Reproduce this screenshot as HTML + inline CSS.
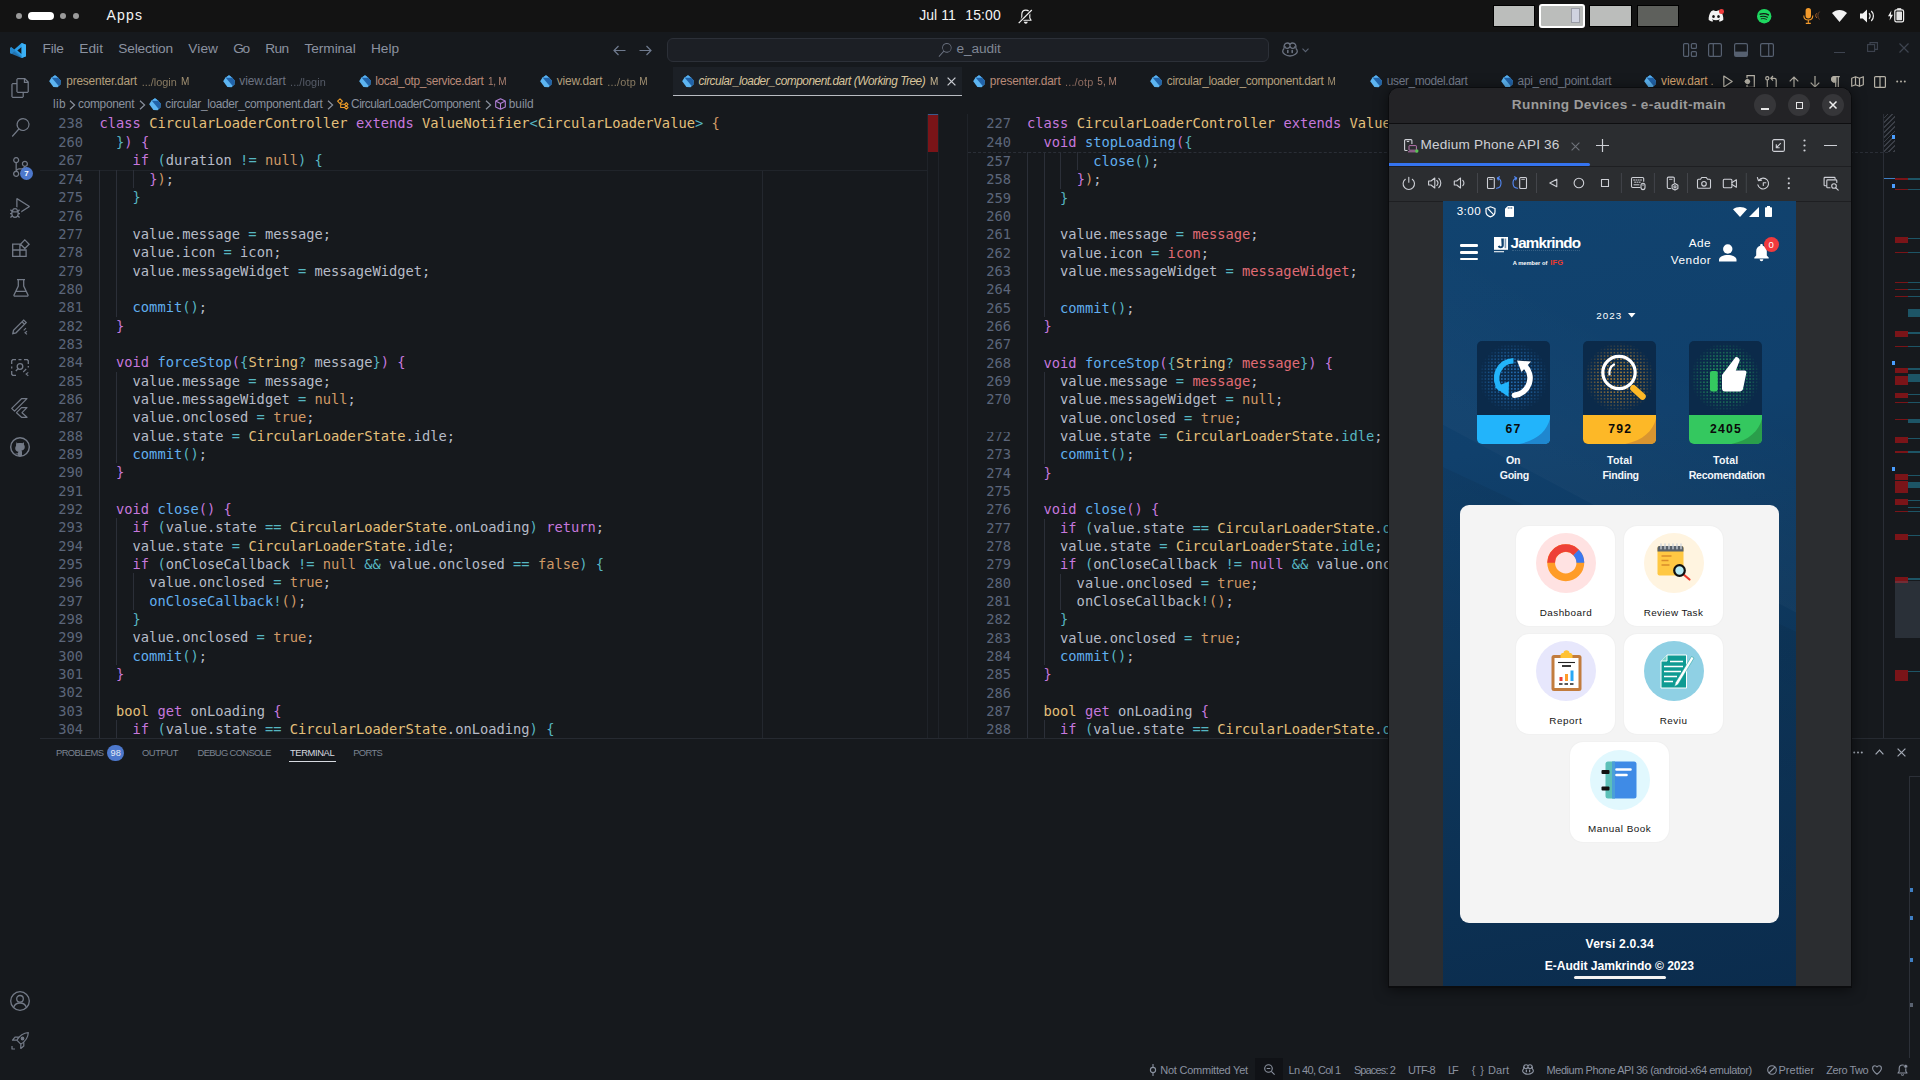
<!DOCTYPE html>
<html lang="en"><head><meta charset="utf-8"><title>e_audit - Visual Studio Code</title>
<style>
*{box-sizing:border-box;margin:0;padding:0}
html,body{width:1920px;height:1080px;overflow:hidden;background:#16191d}
body{position:relative;font-family:"Liberation Sans","DejaVu Sans",sans-serif;color:#abb2bf;font-size:13px}
.abs{position:absolute}
svg{display:block;overflow:visible}
/* gnome */
#gnome{position:absolute;left:0;top:0;width:1920px;height:32px;background:#131313;color:#f2f2f2}
#gnome .t{position:absolute;top:0;height:32px;line-height:31px;font-size:14.6px;white-space:nowrap;color:#f4f4f4}
.ws{position:absolute;top:5px;height:22px;background:#bbbdbb;border:1px solid #000}
/* vscode */
#title{position:absolute;left:0;top:32px;width:1920px;height:35px;background:#16191d}
#title .m{position:absolute;top:0;height:35px;line-height:34px;font-size:13.6px;color:#8b92a0;white-space:nowrap}
#search{position:absolute;left:667px;top:38px;width:602px;height:24px;border-radius:6px;background:#1c1f25;border:1px solid #2c3038}
#act{position:absolute;left:0;top:67px;width:40px;height:991px;background:#16191d}
#act svg{position:absolute;left:8px}
.tab{position:absolute;top:67px;height:29px;line-height:28px;font-size:12.3px;white-space:nowrap}
.tab .d{font-size:11.3px;opacity:.75;margin-left:6px}
.tab .s{font-size:10px;margin-left:5px}
.mod{color:#b9a27a}.gry{color:#6d7483}.err{color:#c4846c}
.dart{position:absolute;width:13px;height:13px}
#crumbs{position:absolute;left:40px;top:96px;height:18px;line-height:17px;font-size:12.1px;color:#8a919e;white-space:nowrap}
.code{position:absolute;top:114px;font-family:"DejaVu Sans Mono","Liberation Mono",monospace;font-size:13.74px;color:#b6bcc8}
.code .ln{height:18.333px;line-height:18.333px;position:absolute;left:0;width:100%}
.code .no{position:absolute;left:0;top:0;text-align:right;color:#5c667a}
.code .cd{position:absolute;top:0;white-space:pre}
.code.left{left:40px;width:887px}.code.left .no{width:43px}.code.left .cd{left:59.5px}
.code.right{left:967px;width:430px;overflow:hidden;height:624px}.code.right .no{width:44px}.code.right .cd{left:60px}
.k{color:#c678dd}.c{color:#e5c07b}.f{color:#61afef}.o{color:#56b6c2}.n{color:#d19a66}.v{color:#e06c75}
.b1{color:#d19a66}.b2{color:#c678dd}.b3{color:#56b6c2}
.guide{position:absolute;width:1px;background:#2b2f38}
#panel{position:absolute;left:40px;top:738px;width:1880px;height:320px;border-top:1px solid #262a31}
.pt{position:absolute;top:6px;height:18px;line-height:18px;font-size:9.4px;color:#7c8492;white-space:nowrap;letter-spacing:.05px}
#status{position:absolute;left:0;top:1058px;width:1920px;height:22px;background:#16191d}
#status .s{position:absolute;top:0;height:22px;line-height:22px;font-size:10.4px;color:#8b92a0;white-space:nowrap}
/* emulator */
#emu{position:absolute;left:1388px;top:88px;width:464px;height:900px;background:#2b2d30;border-radius:10px 10px 0 0;border:1px solid #0c0c0d;overflow:hidden}
.ft{position:absolute;white-space:pre}
</style></head><body>
<div id="gnome">
 <div class="abs" style="left:16px;top:13px;width:6px;height:6px;border-radius:3px;background:#9a9a9a"></div>
 <div class="abs" style="left:28px;top:12px;width:26px;height:8px;border-radius:4px;background:#fff"></div>
 <div class="abs" style="left:60px;top:13px;width:6px;height:6px;border-radius:3px;background:#9a9a9a"></div>
 <div class="abs" style="left:73px;top:13px;width:6px;height:6px;border-radius:3px;background:#9a9a9a"></div>
 <div class="ws" style="left:1493px;width:42px"></div>
 <div class="ws" style="left:1539px;width:46px;top:4px;height:24px;border:2px solid #fff;border-radius:3px"><div class="abs" style="left:30px;top:2px;width:9px;height:15px;background:#d0d3e0;border:1px solid #9a9ca6"></div></div>
 <div class="ws" style="left:1589px;width:43px"></div>
 <div class="ws" style="left:1637px;width:42px;background:#5e605c"></div>

 <!-- bell slash -->
 <svg class="abs" style="left:1017px;top:8px" width="17" height="17" viewBox="1017 8 17 17" fill="none" stroke="#f2f2f2" stroke-width="1.100" stroke-linejoin="round"><path d="M1020.500 20.300h10.600l-1.300-2.300v-3.400c0-2.700-1.700-4.500-4-4.500s-4 1.800-4 4.500v3.400z"/><path d="M1023.800 21.800c.3 1.300 1 1.900 2 1.900s1.700-.6 2-1.900z" fill="#f2f2f2" stroke="none"/><path d="M1018.700 23.100 1031.800 10" stroke="#131313" stroke-width="3"/><path d="M1018.700 23.100 1031.800 10" stroke-width="1.200"/></svg>
 <!-- discord -->
 <svg class="abs" style="left:1708px;top:10px" width="16" height="12" viewBox="0 0 16 12"><path d="M3.200 1.200C4.300.6 5.300.3 6.200.2l.4.800c.9-.1 1.900-.1 2.800 0l.4-.8c.9.100 1.900.4 3 1C14.700 3.900 15.600 7 15.300 10c-1.200.9-2.400 1.500-3.700 1.800l-.8-1.300c.5-.2.900-.4 1.300-.7l-.3-.3c-2.400 1.100-5.200 1.100-7.600 0l-.3.300c.4.300.8.500 1.300.7l-.8 1.300C3.100 11.500 1.900 10.900.7 10 .4 7 1.300 3.900 3.200 1.200z" fill="#f2f2f2"/><ellipse cx="5.500" cy="6.600" rx="1.300" ry="1.500" fill="#131313"/><ellipse cx="10.500" cy="6.600" rx="1.300" ry="1.500" fill="#131313"/></svg>
 <div class="abs" style="left:1719px;top:9.200px;width:4.600px;height:4.600px;border-radius:2.300px;background:#ed3b3b"></div>
 <!-- spotify -->
 <svg class="abs" style="left:1756.800px;top:8.500px" width="14.400" height="14.400" viewBox="0 0 14.400 14.400"><circle cx="7.200" cy="7.200" r="7.200" fill="#1ed760"/><g fill="none" stroke="#131313" stroke-linecap="round"><path d="M3.200 5.200c2.800-.9 5.800-.6 8.200.7" stroke-width="1.400"/><path d="M3.700 7.600c2.300-.7 4.700-.4 6.700.7" stroke-width="1.100"/><path d="M4.200 9.800c1.800-.5 3.600-.3 5.200.6" stroke-width=".9"/></g></svg>
 <!-- mic -->
 <svg class="abs" style="left:1802px;top:7px" width="20" height="18" viewBox="1802 7 20 18" fill="none"><rect x="1805.600" y="8" width="5.400" height="10.400" rx="2.700" fill="#f39a2b"/><path d="M1803.800 15.500c0 2.700 1.900 4.500 4.500 4.500s4.500-1.800 4.500-4.500M1808.300 20v3.200M1805.800 23.400h5" stroke="#f39a2b" stroke-width="1.100"/><path d="M1816.800 13.300a3 3 0 0 0 0 4.600" stroke="#b8692a" stroke-width="1"/><path d="M1819.600 11.600a5.500 5.500 0 0 0 0 8" stroke="#6e4326" stroke-width="1"/></svg>
 <!-- wifi -->
 <svg class="abs" style="left:1832.300px;top:10px" width="15" height="12" viewBox="0 0 15 12"><path d="M7.500 12 0 3C2.200 1 4.700 0 7.500 0s5.300 1 7.500 3z" fill="#f2f2f2"/></svg>
 <!-- volume -->
 <svg class="abs" style="left:1860.400px;top:9px" width="15" height="14" viewBox="0 0 15 14" fill="none"><path d="M0 4.500h2.800L7 .5v13L2.800 9.500H0z" fill="#f2f2f2"/><path d="M9 4.300a3.800 3.800 0 0 1 0 5.400" stroke="#f2f2f2" stroke-width="1.200"/><path d="M11.300 2a7 7 0 0 1 0 10" stroke="#f2f2f2" stroke-width="1.200"/></svg>
 <!-- battery -->
 <svg class="abs" style="left:1888px;top:8px" width="16.500" height="14.500" viewBox="0 0 16.500 14.500" fill="none"><path d="M3.400 2.500 0 8.300h2.200L1.600 12.500 5 6.700H2.800z" fill="#f2f2f2"/><rect x="6.800" y="1.800" width="8.800" height="12" rx="1.600" stroke="#f2f2f2" stroke-width="1.200"/><rect x="9.200" y=".2" width="4" height="1.600" fill="#f2f2f2"/><rect x="8.400" y="3.400" width="5.600" height="8.800" rx=".6" fill="#e4e4e4"/></svg>
</div>
<div id="title">
 <!-- vscode logo -->
 <svg class="abs" style="left:10px;top:10.500px" width="16" height="15" viewBox="0 0 16 15"><path d="M11.600 0 16 1.800v11.400L11.600 15 4.300 8.600 1.400 10.800 0 10.100V4.900l1.400-.7 2.900 2.200zM11.600 4.100 7.300 7.500l4.300 3.400z" fill="#2b9fe9"/><path d="M11.600 0 16 1.800v11.400L11.600 15z" fill="#3bb0f5"/><path d="M0 4.900l1.400-.7L11.600 13v2L1.400 10.800 0 10.100z" fill="#2582c8" opacity=".85"/></svg>
 <!-- nav arrows -->
 <svg class="abs" style="left:613px;top:13px" width="13" height="11" viewBox="0 0 13 11" fill="none" stroke="#6f7a8e" stroke-width="1.200"><path d="M12.500 5.500H1M5.500 1 1 5.500 5.500 10"/></svg>
 <svg class="abs" style="left:639px;top:13px" width="13" height="11" viewBox="0 0 13 11" fill="none" stroke="#6f7a8e" stroke-width="1.200"><path d="M.5 5.500H12M7.500 1 12 5.500 7.500 10"/></svg>
 <!-- copilot -->
 <svg class="abs" style="left:1281.500px;top:10px" width="16" height="15" viewBox="0 0 16 15" fill="none" stroke="#6b7280" stroke-width="1.300"><path d="M2.200 6.500C1.500 3 3 1 5.500 1 7.300 1 8 2.200 8 3.500 8 2.200 8.700 1 10.500 1c2.500 0 4 2 3.300 5.500"/><path d="M2.200 6.500C1 7.300.7 8 .7 9.500c0 1.500 2.800 4.500 7.300 4.500s7.300-3 7.300-4.500c0-1.500-.3-2.200-1.500-3"/><path d="M5.800 8.500v2M10.200 8.500v2" stroke-width="1.600" stroke-linecap="round"/><path d="M8 3.500c0 1.800-1 2.800-2.800 2.800S2.800 5.500 3 3.800M8 3.500c0 1.800 1 2.800 2.800 2.800s2.400-.8 2.200-2.500"/></svg>
 <svg class="abs" style="left:1301.500px;top:16px" width="7" height="5" viewBox="0 0 7 5" fill="none" stroke="#5b6373" stroke-width="1.100"><path d="M.5.700 3.500 3.700 6.500.7"/></svg>
 <!-- layout icons -->
 <svg class="abs" style="left:1682.500px;top:10.500px" width="14" height="14" viewBox="0 0 14 14" fill="none" stroke="#566070" stroke-width="1.200"><rect x=".6" y=".6" width="5" height="12.800" rx="1"/><rect x="8.400" y=".6" width="5" height="4.800" rx="1"/><rect x="8.400" y="8.600" width="5" height="4.800" rx="1"/></svg>
 <svg class="abs" style="left:1708px;top:10.500px" width="14" height="14" viewBox="0 0 14 14" fill="none" stroke="#566070" stroke-width="1.200"><rect x=".6" y=".6" width="12.800" height="12.800" rx="1.500"/><path d="M5.300.6v12.800"/></svg>
 <svg class="abs" style="left:1734px;top:10.500px" width="14" height="14" viewBox="0 0 14 14" fill="none" stroke="#566070" stroke-width="1.200"><rect x=".6" y=".6" width="12.800" height="12.800" rx="1.500"/><rect x="1" y="8.600" width="12" height="4.600" fill="#566070" stroke="none"/></svg>
 <svg class="abs" style="left:1760px;top:10.500px" width="14" height="14" viewBox="0 0 14 14" fill="none" stroke="#566070" stroke-width="1.200"><rect x=".6" y=".6" width="12.800" height="12.800" rx="1.500"/><path d="M8.700.6v12.800"/></svg>
 <!-- window controls -->
 <div class="abs" style="left:1834px;top:20px;width:11px;height:1px;background:#3e4450"></div>
 <svg class="abs" style="left:1867px;top:10px" width="11" height="10" viewBox="0 0 11 10" fill="none" stroke="#3e4450" stroke-width="1.100"><rect x=".6" y="2.600" width="7" height="6.800"/><path d="M3 2.600V.6h7.400v6.800H7.800"/></svg>
 <svg class="abs" style="left:1898.500px;top:10.500px" width="10" height="10" viewBox="0 0 10 10" fill="none" stroke="#3e4450" stroke-width="1.200"><path d="M.5.500 9.500 9.500M9.500.5.5 9.500"/></svg>
</div>
<div id="search"></div>
<svg class="abs" style="left:938px;top:43px" width="14" height="14" viewBox="0 0 24 24" fill="#6b7280"><path d="M15.250 0a8.250 8.250 0 0 0-6.180 13.720L1 22.880l1.120 1.120 8.050-9.120A8.251 8.251 0 1 0 15.250.010V0zm0 15a6.750 6.750 0 1 1 0-13.500 6.750 6.750 0 0 1 0 13.500z"/></svg>
<div id="act">
<!-- files -->
<svg class="abs" style="left:10.5px;top:10.5px" width="19" height="20" viewBox="0 0 22 24" fill="#737a87"><path d="M17.5 0h-9L7 1.5V6H2.5L1 7.5v15.07L2.5 24h12.07L16 22.57V18h4.7l1.3-1.43V4.5L17.5 0zm0 2.12l2.38 2.38H17.5V2.12zm-3 20.38h-12v-15H7v9.07L8.500 18h6v4.5zm6-6h-12v-15H16V6h4.500v10.500z" transform="translate(-1 0)"/></svg>
<!-- search -->
<svg class="abs" style="left:11px;top:51px" width="19" height="19" viewBox="0 0 24 24" fill="#737a87"><path d="M15.250 0a8.250 8.250 0 0 0-6.180 13.720L1 22.880l1.120 1.120 8.050-9.120A8.251 8.251 0 1 0 15.250.010V0zm0 15a6.750 6.750 0 1 1 0-13.500 6.750 6.750 0 0 1 0 13.500z"/></svg>
<!-- scm -->
<svg class="abs" style="left:12px;top:90px" width="17" height="20" viewBox="2.500 0 19 24" fill="#737a87"><path d="M21.007 8.222A3.738 3.738 0 0 0 15.045 5.200a3.737 3.737 0 0 0 1.156 6.583 2.988 2.988 0 0 1-2.668 1.670h-2.990a4.456 4.456 0 0 0-2.989 1.165V7.400a3.737 3.737 0 1 0-1.494 0v9.117a3.776 3.776 0 1 0 1.816.099 2.990 2.990 0 0 1 2.668-1.667h2.990a4.484 4.484 0 0 0 4.223-3.039 3.736 3.736 0 0 0 3.250-3.687zM4.565 3.738a2.242 2.242 0 1 1 4.484 0 2.242 2.242 0 0 1-4.484 0zm4.484 16.441a2.242 2.242 0 1 1-4.484 0 2.242 2.242 0 0 1 4.484 0zm8.221-9.715a2.242 2.242 0 1 1 0-4.485 2.242 2.242 0 0 1 0 4.485z"/></svg>
<div class="abs" style="left:20px;top:100px;width:13px;height:13px;border-radius:7px;background:#4d78cc;color:#fff;font-size:8px;font-weight:bold;line-height:13px;text-align:center">7</div>
<!-- debug -->
<svg class="abs" style="left:10px;top:130.500px" width="20" height="20" viewBox="0 0 24 24" fill="#737a87"><path d="M10.940 13.500l-1.320 1.320a3.730 3.730 0 0 0-7.240 0L1.060 13.500 0 14.560l1.720 1.720-.22.22V18H0v1.500h1.500v.080c.077.489.214.966.410 1.420L0 22.940 1.060 24l1.650-1.650A4.308 4.308 0 0 0 6 24a4.310 4.310 0 0 0 3.290-1.650L10.940 24 12 22.940 10.090 21c.198-.464.336-.951.410-1.450v-.1H12V18h-1.500v-1.500l-.22-.22L12 14.560l-1.060-1.060zM6 13.500a2.250 2.250 0 0 1 2.250 2.250h-4.500A2.250 2.250 0 0 1 6 13.500zm3 6a3.330 3.330 0 0 1-3 3 3.330 3.330 0 0 1-3-3v-2.250h6v2.250zm14.760-9.900v1.260L13.500 17.370V15.600l8.500-5.370L9 2v9.460a5.070 5.070 0 0 0-1.500-.72V.630L8.640 0l15.120 9.600z"/></svg>
<!-- extensions -->
<svg class="abs" style="left:12px;top:172px" width="18" height="18" viewBox="0 0 18 18" fill="none" stroke="#737a87" stroke-width="1.300"><path d="M0.700 5.200h7.200v12.100h-7.200zM0.700 11h13.400v6.300h-13.400M14.100 11v6.300M12.800 0.900l4.300 4.300-4.300 4.300-4.300-4.300z"/></svg>
<!-- beaker -->
<svg class="abs" style="left:12.500px;top:211.500px" width="16" height="18" viewBox="0 0 16 18" fill="none" stroke="#737a87" stroke-width="1.300"><path d="M4 0.700h8M5.300 0.700v6.300L0.900 16.200l0.500 1h13.200l0.500-1L10.700 7V0.700M2.600 12.400h10.800"/></svg>
<!-- pencil sparkle -->
<svg class="abs" style="left:12px;top:252px" width="16" height="16" viewBox="0 0 16 16" fill="none" stroke="#737a87" stroke-width="1.300"><path d="M0.800 14.600l0.700-3.300L11.700 1.100l2.500 2.500L4 13.800zM10 2.800l2.500 2.500"/><path d="M11.700 11.400l2.300-2.300M15 12.200l-2 1.600 2 1.600" stroke-width="1.100"/></svg>
<!-- scan -->
<svg class="abs" style="left:11px;top:292px" width="18" height="18" viewBox="0 0 18 18" fill="none" stroke="#737a87" stroke-width="1.300"><path d="M0.700 5V1.700l1-1H5M13 0.700h3.300l1 1V5M0.700 12v3.300l1 1H5M0.700 7.500v2M7.500 0.700h3M17.300 7v1.500"/><circle cx="9" cy="7.500" r="2.800"/><path d="M7 9.700l-2.200 2.300"/><path d="M12.200 13l3-3M17.300 13.400l-2.200 1.700 2.200 1.700" stroke-width="1.100"/></svg>
<!-- flutter -->
<svg class="abs" style="left:11px;top:330.500px" width="17" height="20" viewBox="0 0 17 20" fill="none" stroke="#737a87" stroke-width="1.200" stroke-linejoin="round"><path d="M10.500 0.700h5.500L3.500 13.200 0.700 10.400zM10.500 9.700h5.500L11 14.700l5 4.600h-5.500L5.500 14.700z"/></svg>
<!-- github -->
<svg class="abs" style="left:10px;top:370px" width="20" height="20" viewBox="0 0 20 20"><circle cx="10" cy="10" r="9.300" fill="none" stroke="#737a87" stroke-width="1.400"/><path d="M6.300 5.200l1.300 1c1.500-.4 3.300-.4 4.800 0l1.300-1c.4.900.4 1.700.2 2.300.6.700.9 1.500.9 2.500 0 2.400-1.500 3.300-3.300 3.600.4.400.5.900.5 1.600v3.800h-4v-1.500c-1.800.3-2.400-.6-2.900-1.500 1 .6 1.900.9 2.900 0 0-.5.200-.9.500-1.200C6.700 14.500 5.200 13.600 5.200 11.200c0-1 .3-1.800.9-2.500-.2-.6-.2-1.400.2-2.300z" fill="#737a87"/></svg>
<!-- account -->
<svg class="abs" style="left:10px;top:924px" width="20" height="20" viewBox="0 0 20 20" fill="none" stroke="#737a87" stroke-width="1.300"><circle cx="10" cy="10" r="9.300"/><circle cx="10" cy="7.800" r="3.300"/><path d="M3.600 16.600c1-3.300 3.400-4.600 6.400-4.600s5.400 1.300 6.400 4.600"/></svg>
<!-- rocket -->
<svg class="abs" style="left:10.500px;top:965px" width="18" height="18" viewBox="0 0 18 18" fill="none" stroke="#737a87" stroke-width="1.200" stroke-linejoin="round"><path d="M17.300 0.700c-5 .3-8.500 2.600-11.500 7.500l4 4c4.900-3 7.200-6.500 7.500-11.500zM5.800 8.200H1.500l2.500-3h3.600M9.800 12.200v4.300l3-2.500v-3.600M1 14v3h3"/><circle cx="11.500" cy="6.500" r="1.300" fill="#737a87"/></svg>
</div>

<!-- tabs -->
<div class="abs" style="left:673px;top:67px;width:289px;height:29px;background:#1c2026;border-bottom:1.500px solid #b9bcc2"></div>
<svg class="abs" style="left:48.60px;top:75.40px" width="12" height="12.5" viewBox="0 0 12 12.500"><path d="M6 .2 9 2.500 11.700 5.600 11.400 9.400 8.600 12.200 4.400 11.900 .2 6.200 2.500 2.500z" fill="#5db5f2"/><path d="M2.600 2.500 8.900 2.600 11.700 5.600 11.400 9.400 9.700 11.100z" fill="#2163a9"/><path d="M3.400 2.500 6 .2 8.900 2.600z" fill="#55b2f6"/></svg><svg class="abs" style="left:223.00px;top:75.40px" width="12" height="12.5" viewBox="0 0 12 12.500"><path d="M6 .2 9 2.500 11.700 5.600 11.400 9.400 8.600 12.200 4.400 11.900 .2 6.200 2.500 2.500z" fill="#5db5f2"/><path d="M2.600 2.500 8.900 2.600 11.700 5.600 11.400 9.400 9.700 11.100z" fill="#2163a9"/><path d="M3.400 2.500 6 .2 8.900 2.600z" fill="#55b2f6"/></svg><svg class="abs" style="left:359.30px;top:75.40px" width="12" height="12.5" viewBox="0 0 12 12.500"><path d="M6 .2 9 2.500 11.700 5.600 11.400 9.400 8.600 12.200 4.400 11.900 .2 6.200 2.500 2.500z" fill="#5db5f2"/><path d="M2.600 2.500 8.900 2.600 11.700 5.600 11.400 9.400 9.700 11.100z" fill="#2163a9"/><path d="M3.400 2.500 6 .2 8.900 2.600z" fill="#55b2f6"/></svg><svg class="abs" style="left:540.00px;top:75.40px" width="12" height="12.5" viewBox="0 0 12 12.500"><path d="M6 .2 9 2.500 11.700 5.600 11.400 9.400 8.600 12.200 4.400 11.900 .2 6.200 2.500 2.500z" fill="#5db5f2"/><path d="M2.600 2.500 8.900 2.600 11.700 5.600 11.400 9.400 9.700 11.100z" fill="#2163a9"/><path d="M3.400 2.500 6 .2 8.900 2.600z" fill="#55b2f6"/></svg><svg class="abs" style="left:682.00px;top:75.40px" width="12" height="12.5" viewBox="0 0 12 12.500"><path d="M6 .2 9 2.500 11.700 5.600 11.400 9.400 8.600 12.200 4.400 11.900 .2 6.200 2.500 2.500z" fill="#5db5f2"/><path d="M2.600 2.500 8.900 2.600 11.700 5.600 11.400 9.400 9.700 11.100z" fill="#2163a9"/><path d="M3.400 2.500 6 .2 8.900 2.600z" fill="#55b2f6"/></svg><svg class="abs" style="left:973.00px;top:75.40px" width="12" height="12.5" viewBox="0 0 12 12.500"><path d="M6 .2 9 2.500 11.700 5.600 11.400 9.400 8.600 12.200 4.400 11.900 .2 6.200 2.500 2.500z" fill="#5db5f2"/><path d="M2.600 2.500 8.900 2.600 11.700 5.600 11.400 9.400 9.700 11.100z" fill="#2163a9"/><path d="M3.400 2.500 6 .2 8.900 2.600z" fill="#55b2f6"/></svg><svg class="abs" style="left:1150.00px;top:75.40px" width="12" height="12.5" viewBox="0 0 12 12.500"><path d="M6 .2 9 2.500 11.700 5.600 11.400 9.400 8.600 12.200 4.400 11.900 .2 6.200 2.500 2.500z" fill="#5db5f2"/><path d="M2.600 2.500 8.900 2.600 11.700 5.600 11.400 9.400 9.700 11.100z" fill="#2163a9"/><path d="M3.400 2.500 6 .2 8.900 2.600z" fill="#55b2f6"/></svg><svg class="abs" style="left:1370.00px;top:75.40px" width="12" height="12.5" viewBox="0 0 12 12.500"><path d="M6 .2 9 2.500 11.700 5.600 11.400 9.400 8.600 12.200 4.400 11.900 .2 6.200 2.500 2.500z" fill="#5db5f2"/><path d="M2.600 2.500 8.900 2.600 11.700 5.600 11.400 9.400 9.700 11.100z" fill="#2163a9"/><path d="M3.400 2.500 6 .2 8.900 2.600z" fill="#55b2f6"/></svg><svg class="abs" style="left:1501.00px;top:75.40px" width="12" height="12.5" viewBox="0 0 12 12.500"><path d="M6 .2 9 2.500 11.700 5.600 11.400 9.400 8.600 12.200 4.400 11.900 .2 6.200 2.500 2.500z" fill="#5db5f2"/><path d="M2.600 2.500 8.900 2.600 11.700 5.600 11.400 9.400 9.700 11.100z" fill="#2163a9"/><path d="M3.400 2.500 6 .2 8.900 2.600z" fill="#55b2f6"/></svg><svg class="abs" style="left:1643.70px;top:75.40px" width="12" height="12.5" viewBox="0 0 12 12.500"><path d="M6 .2 9 2.500 11.700 5.600 11.400 9.400 8.600 12.200 4.400 11.900 .2 6.200 2.500 2.500z" fill="#5db5f2"/><path d="M2.600 2.500 8.900 2.600 11.700 5.600 11.400 9.400 9.700 11.100z" fill="#2163a9"/><path d="M3.400 2.500 6 .2 8.900 2.600z" fill="#55b2f6"/></svg>
<svg class="abs" style="left:946.500px;top:77px" width="9" height="9" viewBox="0 0 9 9" fill="none" stroke="#c9ccd2" stroke-width="1.300"><path d="M.6.600 8.400 8.400M8.400.6.600 8.400"/></svg>
<!-- editor actions -->
<svg class="abs" style="left:1722.500px;top:75px" width="10" height="13" viewBox="0 0 10 13" fill="none" stroke="#b5b1a6" stroke-width="1.200" stroke-linejoin="round"><path d="M.8 1 9.200 6.500.8 12z"/></svg>
<svg class="abs" style="left:1743.500px;top:75px" width="11" height="13" viewBox="0 0 11 13" fill="none" stroke="#b5b1a6" stroke-width="1.200"><path d="M3 3V.7h7.300v11.600H3V10"/><circle cx="3.400" cy="6.500" r="2" fill="#b5b1a6"/><path d="M.6 6.500h5.600M3.400 3.700v5.600" stroke-width="1"/></svg>
<svg class="abs" style="left:1765px;top:75px" width="13" height="13" viewBox="0 0 13 13" fill="none" stroke="#b5b1a6" stroke-width="1.200"><circle cx="2.300" cy="3.300" r="1.600"/><path d="M2.300 5v7.500"/><path d="M6 3.300h3.500c1.200 0 1.700.7 1.700 1.700v7.500M8 1 5.800 3.300 8 5.600"/></svg>
<svg class="abs" style="left:1788.500px;top:75.500px" width="10" height="12" viewBox="0 0 10 12" fill="none" stroke="#b5b1a6" stroke-width="1.200"><path d="M5 12V1M.7 5.300 5 1l4.300 4.300"/></svg>
<svg class="abs" style="left:1809.700px;top:75.500px" width="10" height="12" viewBox="0 0 10 12" fill="none" stroke="#b5b1a6" stroke-width="1.200"><path d="M5 0v11M.7 6.700 5 11l4.300-4.300"/></svg>
<svg class="abs" style="left:1831px;top:75.500px" width="9" height="12" viewBox="0 0 9 12" fill="none" stroke="#b5b1a6" stroke-width="1.200"><path d="M8.800.6H3.700C1.800.6.700 1.800.7 3.300S1.800 6 3.700 6h1V.6M4.700.6V12M7.300.6V12" /><path d="M.7 3.300C.7 1.800 1.800.6 3.700.6h1V6h-1C1.800 6 .7 4.800.7 3.300z" fill="#b5b1a6"/></svg>
<svg class="abs" style="left:1851px;top:76px" width="13" height="11" viewBox="0 0 13 11" fill="none" stroke="#b5b1a6" stroke-width="1.200" stroke-linejoin="round"><path d="M.7 2.200 4.500.7l4 1.500L12.300.7v8.100L8.500 10.300l-4-1.500L.7 10.300zM4.500.7v8.100M8.500 2.200v8.100"/></svg>
<svg class="abs" style="left:1874px;top:75.500px" width="12" height="12" viewBox="0 0 12 12" fill="none" stroke="#b5b1a6" stroke-width="1.200"><rect x=".6" y=".6" width="10.800" height="10.800" rx="1"/><path d="M6 .6v10.800"/></svg>
<svg class="abs" style="left:1896px;top:80px" width="10" height="3" viewBox="0 0 10 3" fill="#b5b1a6"><circle cx="1.200" cy="1.500" r="1"/><circle cx="5" cy="1.500" r="1"/><circle cx="8.800" cy="1.500" r="1"/></svg>
<!-- breadcrumb icons -->
<svg class="abs" style="left:149.00px;top:98.00px" width="12" height="12.5" viewBox="0 0 12 12.500"><path d="M6 .2 9 2.500 11.700 5.600 11.400 9.400 8.600 12.200 4.400 11.900 .2 6.200 2.500 2.500z" fill="#5db5f2"/><path d="M2.600 2.500 8.900 2.600 11.700 5.600 11.400 9.400 9.700 11.100z" fill="#2163a9"/><path d="M3.400 2.500 6 .2 8.900 2.600z" fill="#55b2f6"/></svg><svg class="abs" style="left:69.00px;top:99.50px" width="7" height="10" viewBox="0 0 7 10" fill="none" stroke="#8a919e" stroke-width="1.200"><path d="M1 .8 5.600 5 1 9.200"/></svg><svg class="abs" style="left:138.50px;top:99.50px" width="7" height="10" viewBox="0 0 7 10" fill="none" stroke="#8a919e" stroke-width="1.200"><path d="M1 .8 5.600 5 1 9.200"/></svg><svg class="abs" style="left:326.50px;top:99.50px" width="7" height="10" viewBox="0 0 7 10" fill="none" stroke="#8a919e" stroke-width="1.200"><path d="M1 .8 5.600 5 1 9.200"/></svg><svg class="abs" style="left:484.50px;top:99.50px" width="7" height="10" viewBox="0 0 7 10" fill="none" stroke="#8a919e" stroke-width="1.200"><path d="M1 .8 5.600 5 1 9.200"/></svg>
<svg class="abs" style="left:337px;top:98px" width="12" height="12" viewBox="0 0 12 12" fill="none" stroke="#ee9d28" stroke-width="1.100" stroke-linejoin="round"><path d="M3 .8 5.400 3.200 3 5.600.6 3.200zM3.700 4.800v4.700h3.600M3.700 6.300h3.600M9.300 4.600l1.700 1.700-1.700 1.700-1.700-1.700zM9.300 7.800l1.700 1.700-1.700 1.700-1.700-1.700z"/></svg>
<svg class="abs" style="left:494.500px;top:98px" width="11" height="12" viewBox="0 0 11 12" fill="none" stroke="#b180d7" stroke-width="1.100" stroke-linejoin="round"><path d="M5.500.7 10.300 3v6L5.500 11.300.7 9V3zM.7 3l4.800 2.400L10.300 3M5.500 5.400v5.900"/></svg>
<!-- left editor decorations -->
<div class="abs" style="left:761.500px;top:170px;width:1px;height:568px;background:#23272e"></div>
<div class="abs" style="left:40px;top:169.500px;width:887px;height:1px;background:#20242a"></div>
<div class="abs" style="left:927px;top:114px;width:11px;height:38px;background:#7a1418;border-top:1px solid #3a5a8c"></div>
<div class="abs" style="left:926.500px;top:114px;width:1px;height:624px;background:#1f2329"></div>
<div class="abs" style="left:938px;top:114px;width:1px;height:624px;background:#1f2329"></div>
<div class="abs" style="left:966.500px;top:114px;width:1px;height:624px;background:#1f2329"></div>
<div class="guide" style="left:99.00px;top:169.85px;height:568.39px"></div><div class="guide" style="left:116.00px;top:169.85px;height:146.68px"></div><div class="guide" style="left:132.50px;top:169.85px;height:18.34px"></div><div class="guide" style="left:116.00px;top:371.53px;height:91.68px"></div><div class="guide" style="left:116.00px;top:518.22px;height:146.69px"></div><div class="guide" style="left:132.50px;top:573.22px;height:36.68px"></div><div class="guide" style="left:116.00px;top:719.90px;height:18.34px"></div><div class="guide" style="left:1027.00px;top:151.85px;height:586.73px"></div><div class="guide" style="left:1043.54px;top:151.85px;height:165.02px"></div><div class="guide" style="left:1060.08px;top:151.85px;height:36.68px"></div><div class="guide" style="left:1076.62px;top:151.85px;height:18.34px"></div><div class="guide" style="left:1043.54px;top:371.87px;height:91.68px"></div><div class="guide" style="left:1043.54px;top:518.55px;height:146.68px"></div><div class="guide" style="left:1060.08px;top:573.56px;height:36.67px"></div><div class="guide" style="left:1043.54px;top:720.24px;height:18.34px"></div><div class="abs" style="left:1883.3px;top:113.5px;width:1.0px;height:625.0px;background:#2a2e36;"></div><div class="abs" style="left:1883.500px;top:113.500px;width:11.500px;height:38.500px;background:repeating-linear-gradient(135deg,#16191d 0,#16191d 2.200px,#3a3e46 2.200px,#3a3e46 3.400px)"></div><div class="abs" style="left:1891.8px;top:135.0px;width:3.4px;height:4.2px;background:#4a9eff;"></div><div class="abs" style="left:1891.8px;top:184.3px;width:3.4px;height:4.2px;background:#4a9eff;"></div><div class="abs" style="left:1891.8px;top:360.5px;width:3.4px;height:4.2px;background:#4a9eff;"></div><div class="abs" style="left:1891.8px;top:467.3px;width:3.4px;height:4.2px;background:#4a9eff;"></div><div class="abs" style="left:1883.5px;top:178.2px;width:11.5px;height:1.0px;background:#3f7fc4;"></div><div class="abs" style="left:1895.0px;top:178.2px;width:13.0px;height:1.7px;background:#7a1418;"></div><div class="abs" style="left:1908.0px;top:178.2px;width:12.0px;height:1.7px;background:#1d5566;"></div><div class="abs" style="left:1895.0px;top:188.5px;width:13.0px;height:1.7px;background:#7a1418;"></div><div class="abs" style="left:1908.0px;top:188.5px;width:12.0px;height:1.7px;background:#1d5566;"></div><div class="abs" style="left:1895.0px;top:251.7px;width:13.0px;height:1.7px;background:#7a1418;"></div><div class="abs" style="left:1908.0px;top:251.7px;width:12.0px;height:1.7px;background:#1d5566;"></div><div class="abs" style="left:1895.0px;top:281.6px;width:13.0px;height:1.7px;background:#7a1418;"></div><div class="abs" style="left:1908.0px;top:281.6px;width:12.0px;height:1.7px;background:#1d5566;"></div><div class="abs" style="left:1895.0px;top:288.5px;width:13.0px;height:1.7px;background:#7a1418;"></div><div class="abs" style="left:1908.0px;top:288.5px;width:12.0px;height:1.7px;background:#1d5566;"></div><div class="abs" style="left:1895.0px;top:295.6px;width:13.0px;height:1.7px;background:#7a1418;"></div><div class="abs" style="left:1908.0px;top:295.6px;width:12.0px;height:1.7px;background:#1d5566;"></div><div class="abs" style="left:1895.0px;top:345.8px;width:13.0px;height:1.7px;background:#7a1418;"></div><div class="abs" style="left:1908.0px;top:345.8px;width:12.0px;height:1.7px;background:#1d5566;"></div><div class="abs" style="left:1895.0px;top:401.8px;width:13.0px;height:1.7px;background:#7a1418;"></div><div class="abs" style="left:1908.0px;top:401.8px;width:12.0px;height:1.7px;background:#1d5566;"></div><div class="abs" style="left:1895.0px;top:418.5px;width:13.0px;height:1.7px;background:#7a1418;"></div><div class="abs" style="left:1908.0px;top:418.5px;width:12.0px;height:1.7px;background:#1d5566;"></div><div class="abs" style="left:1895.0px;top:451.2px;width:13.0px;height:1.7px;background:#7a1418;"></div><div class="abs" style="left:1908.0px;top:451.2px;width:12.0px;height:1.7px;background:#1d5566;"></div><div class="abs" style="left:1895.0px;top:510.6px;width:13.0px;height:1.7px;background:#7a1418;"></div><div class="abs" style="left:1908.0px;top:510.6px;width:12.0px;height:1.7px;background:#1d5566;"></div><div class="abs" style="left:1895.0px;top:237.0px;width:13.0px;height:6.0px;background:#7a1418;"></div><div class="abs" style="left:1908.0px;top:237.7px;width:12.0px;height:1.7px;background:#1d5566;"></div><div class="abs" style="left:1895.0px;top:331.4px;width:13.0px;height:6.0px;background:#7a1418;"></div><div class="abs" style="left:1908.0px;top:332.1px;width:12.0px;height:1.7px;background:#1d5566;"></div><div class="abs" style="left:1895.0px;top:367.6px;width:13.0px;height:5.6px;background:#7a1418;"></div><div class="abs" style="left:1908.0px;top:368.3px;width:12.0px;height:1.7px;background:#1d5566;"></div><div class="abs" style="left:1895.0px;top:376.0px;width:13.0px;height:9.0px;background:#7a1418;"></div><div class="abs" style="left:1908.0px;top:376.7px;width:12.0px;height:1.7px;background:#1d5566;"></div><div class="abs" style="left:1895.0px;top:392.8px;width:13.0px;height:5.5px;background:#7a1418;"></div><div class="abs" style="left:1908.0px;top:393.5px;width:12.0px;height:1.7px;background:#1d5566;"></div><div class="abs" style="left:1895.0px;top:437.0px;width:13.0px;height:6.0px;background:#7a1418;"></div><div class="abs" style="left:1908.0px;top:437.7px;width:12.0px;height:1.7px;background:#1d5566;"></div><div class="abs" style="left:1895.0px;top:474.0px;width:13.0px;height:6.0px;background:#7a1418;"></div><div class="abs" style="left:1908.0px;top:474.7px;width:12.0px;height:1.7px;background:#1d5566;"></div><div class="abs" style="left:1895.0px;top:481.4px;width:13.0px;height:11.3px;background:#7a1418;"></div><div class="abs" style="left:1908.0px;top:482.1px;width:12.0px;height:1.7px;background:#1d5566;"></div><div class="abs" style="left:1895.0px;top:499.0px;width:13.0px;height:6.0px;background:#7a1418;"></div><div class="abs" style="left:1908.0px;top:499.7px;width:12.0px;height:1.7px;background:#1d5566;"></div><div class="abs" style="left:1895.0px;top:534.0px;width:13.0px;height:6.0px;background:#7a1418;"></div><div class="abs" style="left:1908.0px;top:534.7px;width:12.0px;height:1.7px;background:#1d5566;"></div><div class="abs" style="left:1895.0px;top:577.2px;width:13.0px;height:5.4px;background:#7a1418;"></div><div class="abs" style="left:1908.0px;top:577.9px;width:12.0px;height:1.7px;background:#1d5566;"></div><div class="abs" style="left:1895.0px;top:670.0px;width:13.0px;height:10.5px;background:#7a1418;"></div><div class="abs" style="left:1908.0px;top:670.7px;width:12.0px;height:1.7px;background:#1d5566;"></div><div class="abs" style="left:1908.0px;top:309.0px;width:12.0px;height:8.2px;background:#1d5566;"></div><div class="abs" style="left:1908.0px;top:374.4px;width:12.0px;height:7.6px;background:#1d5566;"></div><div class="abs" style="left:1908.0px;top:420.0px;width:12.0px;height:3.0px;background:#1d5566;"></div><div class="abs" style="left:1908.0px;top:482.3px;width:12.0px;height:6.0px;background:#1d5566;"></div><div class="abs" style="left:1908.0px;top:506.5px;width:12.0px;height:1.7px;background:#1d5566;"></div><div class="abs" style="left:1895.0px;top:581.0px;width:25.0px;height:57.0px;background:rgba(96,108,130,.28);"></div>
<div class="code left"><div class="ln" style="top:0.00px"><span class="no">238</span><span class="cd"><span class="k">class</span> <span class="c">CircularLoaderController</span> <span class="k">extends</span> <span class="c">ValueNotifier</span><span class="o">&lt;</span><span class="c">CircularLoaderValue</span><span class="o">&gt;</span> <span class="b1">{</span></span></div><div class="ln" style="top:18.60px"><span class="no">260</span><span class="cd">  <span class="b3">}</span><span class="b2">)</span> <span class="b2">{</span></span></div><div class="ln" style="top:37.20px"><span class="no">267</span><span class="cd">    <span class="k">if</span> <span class="b3">(</span>duration <span class="o">!=</span> <span class="n">null</span><span class="b3">)</span> <span class="b3">{</span></span></div><div class="ln" style="top:55.85px"><span class="no">274</span><span class="cd">      <span class="b2">}</span><span class="b1">)</span>;</span></div><div class="ln" style="top:74.19px"><span class="no">275</span><span class="cd">    <span class="b3">}</span></span></div><div class="ln" style="top:92.52px"><span class="no">276</span><span class="cd"></span></div><div class="ln" style="top:110.85px"><span class="no">277</span><span class="cd">    value.message <span class="o">=</span> message;</span></div><div class="ln" style="top:129.19px"><span class="no">278</span><span class="cd">    value.icon <span class="o">=</span> icon;</span></div><div class="ln" style="top:147.52px"><span class="no">279</span><span class="cd">    value.messageWidget <span class="o">=</span> messageWidget;</span></div><div class="ln" style="top:165.86px"><span class="no">280</span><span class="cd"></span></div><div class="ln" style="top:184.19px"><span class="no">281</span><span class="cd">    <span class="f">commit</span><span class="b3">(</span><span class="b3">)</span>;</span></div><div class="ln" style="top:202.53px"><span class="no">282</span><span class="cd">  <span class="b2">}</span></span></div><div class="ln" style="top:220.87px"><span class="no">283</span><span class="cd"></span></div><div class="ln" style="top:239.20px"><span class="no">284</span><span class="cd">  <span class="k">void</span> <span class="f">forceStop</span><span class="b2">(</span><span class="b3">{</span><span class="c">String</span><span class="o">?</span> message<span class="b3">}</span><span class="b2">)</span> <span class="b2">{</span></span></div><div class="ln" style="top:257.53px"><span class="no">285</span><span class="cd">    value.message <span class="o">=</span> message;</span></div><div class="ln" style="top:275.87px"><span class="no">286</span><span class="cd">    value.messageWidget <span class="o">=</span> <span class="n">null</span>;</span></div><div class="ln" style="top:294.21px"><span class="no">287</span><span class="cd">    value.onclosed <span class="o">=</span> <span class="n">true</span>;</span></div><div class="ln" style="top:312.54px"><span class="no">288</span><span class="cd">    value.state <span class="o">=</span> <span class="c">CircularLoaderState</span>.idle;</span></div><div class="ln" style="top:330.88px"><span class="no">289</span><span class="cd">    <span class="f">commit</span><span class="b3">(</span><span class="b3">)</span>;</span></div><div class="ln" style="top:349.21px"><span class="no">290</span><span class="cd">  <span class="b2">}</span></span></div><div class="ln" style="top:367.54px"><span class="no">291</span><span class="cd"></span></div><div class="ln" style="top:385.88px"><span class="no">292</span><span class="cd">  <span class="k">void</span> <span class="f">close</span><span class="b2">(</span><span class="b2">)</span> <span class="b2">{</span></span></div><div class="ln" style="top:404.22px"><span class="no">293</span><span class="cd">    <span class="k">if</span> <span class="b3">(</span>value.state <span class="o">==</span> <span class="c">CircularLoaderState</span>.onLoading<span class="b3">)</span> <span class="k">return</span>;</span></div><div class="ln" style="top:422.55px"><span class="no">294</span><span class="cd">    value.state <span class="o">=</span> <span class="c">CircularLoaderState</span>.idle;</span></div><div class="ln" style="top:440.88px"><span class="no">295</span><span class="cd">    <span class="k">if</span> <span class="b3">(</span>onCloseCallback <span class="o">!=</span> <span class="n">null</span> <span class="o">&amp;&amp;</span> value.onclosed <span class="o">==</span> <span class="n">false</span><span class="b3">)</span> <span class="b3">{</span></span></div><div class="ln" style="top:459.22px"><span class="no">296</span><span class="cd">      value.onclosed <span class="o">=</span> <span class="n">true</span>;</span></div><div class="ln" style="top:477.56px"><span class="no">297</span><span class="cd">      <span class="f">onCloseCallback</span><span class="o">!</span><span class="b1">(</span><span class="b1">)</span>;</span></div><div class="ln" style="top:495.89px"><span class="no">298</span><span class="cd">    <span class="b3">}</span></span></div><div class="ln" style="top:514.23px"><span class="no">299</span><span class="cd">    value.onclosed <span class="o">=</span> <span class="n">true</span>;</span></div><div class="ln" style="top:532.56px"><span class="no">300</span><span class="cd">    <span class="f">commit</span><span class="b3">(</span><span class="b3">)</span>;</span></div><div class="ln" style="top:550.89px"><span class="no">301</span><span class="cd">  <span class="b2">}</span></span></div><div class="ln" style="top:569.23px"><span class="no">302</span><span class="cd"></span></div><div class="ln" style="top:587.57px"><span class="no">303</span><span class="cd">  <span class="c">bool</span> <span class="k">get</span> onLoading <span class="b2">{</span></span></div><div class="ln" style="top:605.90px"><span class="no">304</span><span class="cd">    <span class="k">if</span> <span class="b3">(</span>value.state <span class="o">==</span> <span class="c">CircularLoaderState</span>.onLoading<span class="b3">)</span> <span class="b3">{</span></span></div></div>
<div class="code right"><div class="ln" style="top:0.00px"><span class="no">227</span><span class="cd"><span class="k">class</span> <span class="c">CircularLoaderController</span> <span class="k">extends</span> <span class="c">ValueNotifier</span><span class="o">&lt;</span><span class="c">CircularLoaderValue</span><span class="o">&gt;</span> <span class="b1">{</span></span></div><div class="ln" style="top:18.60px"><span class="no">240</span><span class="cd">  <span class="k">void</span> <span class="f">stopLoading</span><span class="b2">(</span><span class="b3">{</span></span></div><div class="ln" style="top:37.85px"><span class="no">257</span><span class="cd">        <span class="f">close</span><span class="b3">(</span><span class="b3">)</span>;</span></div><div class="ln" style="top:56.19px"><span class="no">258</span><span class="cd">      <span class="b2">}</span><span class="b1">)</span>;</span></div><div class="ln" style="top:74.52px"><span class="no">259</span><span class="cd">    <span class="b3">}</span></span></div><div class="ln" style="top:92.85px"><span class="no">260</span><span class="cd"></span></div><div class="ln" style="top:111.19px"><span class="no">261</span><span class="cd">    value.message <span class="o">=</span> <span class="v">message</span>;</span></div><div class="ln" style="top:129.53px"><span class="no">262</span><span class="cd">    value.icon <span class="o">=</span> <span class="v">icon</span>;</span></div><div class="ln" style="top:147.86px"><span class="no">263</span><span class="cd">    value.messageWidget <span class="o">=</span> <span class="v">messageWidget</span>;</span></div><div class="ln" style="top:166.19px"><span class="no">264</span><span class="cd"></span></div><div class="ln" style="top:184.53px"><span class="no">265</span><span class="cd">    <span class="f">commit</span><span class="b3">(</span><span class="b3">)</span>;</span></div><div class="ln" style="top:202.87px"><span class="no">266</span><span class="cd">  <span class="b2">}</span></span></div><div class="ln" style="top:221.20px"><span class="no">267</span><span class="cd"></span></div><div class="ln" style="top:239.53px"><span class="no">268</span><span class="cd">  <span class="k">void</span> <span class="f">forceStop</span><span class="b2">(</span><span class="b3">{</span><span class="c">String</span><span class="o">?</span> <span class="v">message</span><span class="b3">}</span><span class="b2">)</span> <span class="b2">{</span></span></div><div class="ln" style="top:257.87px"><span class="no">269</span><span class="cd">    value.message <span class="o">=</span> <span class="v">message</span>;</span></div><div class="ln" style="top:276.21px"><span class="no">270</span><span class="cd">    value.messageWidget <span class="o">=</span> <span class="n">null</span>;</span></div><div class="ln" style="top:294.54px"><span class="no"></span><span class="cd">    value.onclosed <span class="o">=</span> <span class="n">true</span>;</span></div><div class="ln" style="top:312.88px"><span class="no" style="clip-path:inset(5px 0 0 0)">272</span><span class="cd">    value.state <span class="o">=</span> <span class="c">CircularLoaderState</span>.<span class="o">idle</span>;</span></div><div class="ln" style="top:331.21px"><span class="no">273</span><span class="cd">    <span class="f">commit</span><span class="b3">(</span><span class="b3">)</span>;</span></div><div class="ln" style="top:349.54px"><span class="no">274</span><span class="cd">  <span class="b2">}</span></span></div><div class="ln" style="top:367.88px"><span class="no">275</span><span class="cd"></span></div><div class="ln" style="top:386.22px"><span class="no">276</span><span class="cd">  <span class="k">void</span> <span class="f">close</span><span class="b2">(</span><span class="b2">)</span> <span class="b2">{</span></span></div><div class="ln" style="top:404.55px"><span class="no">277</span><span class="cd">    <span class="k">if</span> <span class="b3">(</span>value.state <span class="o">==</span> <span class="c">CircularLoaderState</span>.<span class="o">onLoading</span><span class="b3">)</span> <span class="k">return</span>;</span></div><div class="ln" style="top:422.88px"><span class="no">278</span><span class="cd">    value.state <span class="o">=</span> <span class="c">CircularLoaderState</span>.<span class="o">idle</span>;</span></div><div class="ln" style="top:441.22px"><span class="no">279</span><span class="cd">    <span class="k">if</span> <span class="b3">(</span>onCloseCallback <span class="o">!=</span> <span class="k">null</span> <span class="o">&amp;&amp;</span> value.onclosed <span class="o">==</span> <span class="n">false</span><span class="b3">)</span> <span class="b3">{</span></span></div><div class="ln" style="top:459.56px"><span class="no">280</span><span class="cd">      value.onclosed <span class="o">=</span> <span class="n">true</span>;</span></div><div class="ln" style="top:477.89px"><span class="no">281</span><span class="cd">      onCloseCallback<span class="o">!</span><span class="b1">(</span><span class="b1">)</span>;</span></div><div class="ln" style="top:496.23px"><span class="no">282</span><span class="cd">    <span class="b3">}</span></span></div><div class="ln" style="top:514.56px"><span class="no">283</span><span class="cd">    value.onclosed <span class="o">=</span> <span class="n">true</span>;</span></div><div class="ln" style="top:532.89px"><span class="no">284</span><span class="cd">    <span class="f">commit</span><span class="b3">(</span><span class="b3">)</span>;</span></div><div class="ln" style="top:551.23px"><span class="no">285</span><span class="cd">  <span class="b2">}</span></span></div><div class="ln" style="top:569.57px"><span class="no">286</span><span class="cd"></span></div><div class="ln" style="top:587.90px"><span class="no">287</span><span class="cd">  <span class="c">bool</span> <span class="k">get</span> onLoading <span class="b2">{</span></span></div><div class="ln" style="top:606.24px"><span class="no">288</span><span class="cd">    <span class="k">if</span> <span class="b3">(</span>value.state <span class="o">==</span> <span class="c">CircularLoaderState</span>.<span class="o">onLoading</span><span class="b3">)</span> <span class="b3">{</span></span></div></div>
<div class="abs" style="left:968px;top:151.500px;width:920px;height:0;border-top:1px dashed #2a2e36"></div>
<!-- panel -->
<div id="panel"></div>
<div class="abs" style="left:107.300px;top:744.500px;width:16.700px;height:16.500px;border-radius:8.500px;background:#4d78cc"></div>
<div class="abs" style="left:288.700px;top:761px;width:47.300px;height:1px;background:#d7dae0"></div>
<svg class="abs" style="left:1853px;top:751px" width="10" height="3" viewBox="0 0 10 3" fill="#a5abb6"><circle cx="1.200" cy="1.500" r="1"/><circle cx="5" cy="1.500" r="1"/><circle cx="8.800" cy="1.500" r="1"/></svg>
<svg class="abs" style="left:1874.500px;top:749px" width="9" height="6" viewBox="0 0 9 6" fill="none" stroke="#a5abb6" stroke-width="1.200"><path d="M.6 5.400 4.500 1.200 8.400 5.400"/></svg>
<svg class="abs" style="left:1896.500px;top:748px" width="9" height="9" viewBox="0 0 9 9" fill="none" stroke="#a5abb6" stroke-width="1.200"><path d="M.6.600 8.400 8.400M8.400.6.600 8.400"/></svg>
<div class="abs" style="left:1908.500px;top:776px;width:1px;height:284px;background:#2c3038"></div>
<div class="abs" style="left:1908.500px;top:776px;width:12px;height:1px;background:#2c3038"></div>
<div class="abs" style="left:1909.500px;top:887.500px;width:3px;height:4px;background:#3f7fc4"></div>
<div class="abs" style="left:1909.500px;top:916px;width:3px;height:4px;background:#3f7fc4"></div>
<div class="abs" style="left:1909.500px;top:958px;width:3px;height:4px;background:#3f7fc4"></div>
<div class="abs" style="left:1909.500px;top:1002.500px;width:3px;height:4px;background:#5a6270"></div>
<!-- status -->
<div id="status">
 <div class="abs" style="left:1255px;top:0;width:28px;height:22px;background:#101216"></div>
 <svg class="abs" style="left:1148.500px;top:5.500px" width="8" height="12" viewBox="0 0 8 12" fill="none" stroke="#8b92a0" stroke-width="1.100"><circle cx="4" cy="6" r="2.600"/><path d="M4 0v3.400M4 8.600V12"/></svg>
 <svg class="abs" style="left:1263.500px;top:6px" width="11" height="11" viewBox="0 0 11 11" fill="none" stroke="#8b92a0" stroke-width="1.100"><circle cx="4.500" cy="4.500" r="3.800"/><path d="M7.300 7.300 10.600 10.600M2.700 4.500h3.600"/></svg>
 <svg class="abs" style="left:1522px;top:5.500px" width="12" height="11" viewBox="0 0 16 15" fill="none" stroke="#8b92a0" stroke-width="1.600"><path d="M2.200 6.500C1.500 3 3 1 5.500 1 7.300 1 8 2.200 8 3.500 8 2.200 8.700 1 10.500 1c2.500 0 4 2 3.300 5.500"/><path d="M2.200 6.500C1 7.300.7 8 .7 9.500c0 1.500 2.800 4.500 7.300 4.500s7.300-3 7.300-4.500c0-1.500-.3-2.200-1.500-3"/><path d="M5.800 8.500v2M10.200 8.500v2" stroke-width="1.800" stroke-linecap="round"/><path d="M8 3.500c0 1.800-1 2.800-2.800 2.800S2.800 5.500 3 3.800M8 3.500c0 1.800 1 2.800 2.800 2.800s2.400-.8 2.200-2.500"/></svg>
 <svg class="abs" style="left:1766.500px;top:6.500px" width="10" height="10" viewBox="0 0 10 10" fill="none" stroke="#8b92a0" stroke-width="1.100"><circle cx="5" cy="5" r="4.300"/><path d="M8 2 2 8"/></svg>
 <svg class="abs" style="left:1872px;top:6.500px" width="10" height="10" viewBox="0 0 10 10" fill="none" stroke="#8b92a0" stroke-width="1.100" stroke-linejoin="round"><path d="M5 9.300C1.500 6.500.6 5 .6 3.300.6 1.700 1.700.7 2.900.7 3.900.7 4.600 1.300 5 2c.4-.7 1.100-1.300 2.100-1.300 1.200 0 2.300 1 2.300 2.600C9.400 5 8.500 6.500 5 9.300z"/></svg>
 <svg class="abs" style="left:1897px;top:5.500px" width="11" height="12" viewBox="0 0 11 12" fill="none" stroke="#8b92a0" stroke-width="1.100" stroke-linejoin="round"><path d="M1 9h9L8.800 7.200V4.600C8.800 2.400 7.300 1 5.500 1S2.200 2.400 2.200 4.600v2.600zM4.300 10.300c.2.600.6.900 1.200.9s1-.3 1.200-.9"/><circle cx="8.700" cy="2.300" r="1.900" fill="#8b92a0" stroke="#16191d" stroke-width=".6"/></svg>
</div>
<!-- emulator window -->
<div class="abs" style="left:1387.800px;top:86.500px;width:464.200px;height:901px;background:#2b2d30;border-radius:11px 11px 0 0;border:1px solid #0b0c0e;overflow:hidden;box-shadow:0 2px 14px rgba(0,0,0,.55)">
 <div class="abs" style="left:0;top:0;width:463px;height:36.500px;background:#232326;border-bottom:1px solid #0e0e10"></div>
 <div class="abs" style="left:0;top:78.500px;width:463px;height:1px;background:#1e1f22"></div>
 <div class="abs" style="left:0;top:75.800px;width:201px;height:2.800px;background:#3574f0;border-radius:0 1.500px 1.500px 0"></div>
 <div class="abs" style="left:0;top:113px;width:463px;height:1px;background:#1e1f22"></div>
</div>
<!-- title buttons -->
<div class="abs" style="left:1754px;top:94px;width:22px;height:22px;border-radius:11px;background:#363639"></div>
<div class="abs" style="left:1788px;top:94px;width:22px;height:22px;border-radius:11px;background:#363639"></div>
<div class="abs" style="left:1822px;top:94px;width:22px;height:22px;border-radius:11px;background:#363639"></div>
<div class="abs" style="left:1761px;top:108px;width:8px;height:1.500px;background:#e6e6e6"></div>
<div class="abs" style="left:1795.500px;top:101.500px;width:7.500px;height:7.500px;border:1.500px solid #e6e6e6"></div>
<svg class="abs" style="left:1829px;top:101px" width="8" height="8" viewBox="0 0 8 8" fill="none" stroke="#eee" stroke-width="1.500"><path d="M.5.500 7.500 7.500M7.500.5.500 7.500"/></svg>
<!-- device tab icons -->
<svg class="abs" style="left:1403.500px;top:138.500px" width="15" height="14" viewBox="0 0 15 14" fill="none" stroke="#ced0d6" stroke-width="1.100"><path d="M3.500 11.500H1.600a1 1 0 0 1-1-1V1.600a1 1 0 0 1 1-1h5.300a1 1 0 0 1 1 1V5"/><path d="M2.800 2.500h2.400" /><rect x="5" y="6.600" width="7.400" height="4.600" rx=".6" stroke="#c77dbb" stroke-width=".9" fill="#2b2d30"/><path d="M4 12.800h9.400" stroke="#c77dbb" stroke-width=".9"/><circle cx="12.800" cy="12" r="1.700" fill="#57c454" stroke="none"/></svg>
<svg class="abs" style="left:1570.500px;top:141.500px" width="9" height="9" viewBox="0 0 9 9" fill="none" stroke="#6f737a" stroke-width="1.100"><path d="M.6.600 8.400 8.400M8.400.6.600 8.400"/></svg>
<svg class="abs" style="left:1596px;top:139px" width="13" height="13" viewBox="0 0 13 13" fill="none" stroke="#ced0d6" stroke-width="1.200"><path d="M6.500 0v13M0 6.500h13"/></svg>
<svg class="abs" style="left:1771.500px;top:139px" width="13" height="13" viewBox="0 0 13 13" fill="none" stroke="#ced0d6" stroke-width="1.100"><rect x=".6" y=".6" width="11.800" height="11.800" rx="1.500"/><path d="M8.800 4.200 4.500 8.500M4.300 5.300v3.400h3.400"/></svg>
<svg class="abs" style="left:1802.500px;top:139px" width="3" height="13" viewBox="0 0 3 13" fill="#ced0d6"><circle cx="1.500" cy="1.500" r="1.100"/><circle cx="1.500" cy="6.500" r="1.100"/><circle cx="1.500" cy="11.500" r="1.100"/></svg>
<div class="abs" style="left:1823.500px;top:144.500px;width:13px;height:1.300px;background:#ced0d6"></div>
<!-- toolbar -->
<svg class="abs" style="left:1390px;top:165px" width="462" height="36" viewBox="1390 165 462 36" fill="none" stroke="#ced0d6" stroke-width="1.100" stroke-linecap="round" stroke-linejoin="round">
 <g stroke="#43454a" stroke-width="1" stroke-linecap="butt"><path d="M1477.500 173v20M1536.500 173v20M1621.400 173v20M1654.400 173v20M1687.500 173v20M1746.300 173v20"/></g>
 <!-- power -->
 <path d="M1405.300 179.300a5.700 5.700 0 1 0 7 0M1408.800 177.300v5"/>
 <!-- vol up -->
 <path d="M1428.600 181h2.400l3.800-3v10l-3.800-3h-2.400zM1436.800 180.500a3.600 3.600 0 0 1 0 5M1438.800 178.300a6.500 6.500 0 0 1 0 9.400"/>
 <!-- vol down -->
 <path d="M1454.300 181h2.400l3.800-3v10l-3.800-3h-2.400zM1462.800 180.300a3.800 3.800 0 0 1 0 5.400"/>
 <!-- rotate left -->
 <rect x="1487.500" y="177.500" width="6.800" height="11" rx="1"/><path d="M1489.500 179.300h2.800" stroke-width=".9"/>
 <path d="M1496.500 188.300c3.500-.3 4.500-3 4.500-5.300 0-2.300-1.200-4.300-3.500-5M1499.500 176.800l-2.200 1.200 1 2" stroke="#548af7"/>
 <!-- rotate right -->
 <rect x="1519.700" y="177.500" width="6.800" height="11" rx="1"/><path d="M1521.700 179.300h2.800" stroke-width=".9"/>
 <path d="M1517.500 188.300c-3.500-.3-4.500-3-4.500-5.300 0-2.300 1.200-4.300 3.500-5M1514.500 176.800l2.200 1.200-1 2" stroke="#548af7"/>
 <!-- back home overview -->
 <path d="M1556.800 179.200v7.600l-7-3.800z"/><circle cx="1578.900" cy="183" r="4.800"/><rect x="1601.500" y="179.500" width="7" height="7"/>
 <!-- keyboard -->
 <path d="M1640 187.500h-7.300a1.200 1.200 0 0 1-1.200-1.200v-7.600a1.200 1.200 0 0 1 1.200-1.200h9.800a1.200 1.200 0 0 1 1.200 1.200v2.600"/><path d="M1633.600 180h1M1635.900 180h1M1638.200 180h1M1640.500 180h1M1634.600 182.200h1M1636.900 182.200h1M1639.200 182.200h1M1634 184.800h5" stroke-width="1"/>
 <rect x="1641" y="183.200" width="4" height="6.400" rx="2"/><path d="M1643 183.400v2.200" stroke-width=".9"/>
 <!-- phone gear -->
 <path d="M1670.500 188.500h-2a1.200 1.200 0 0 1-1.200-1.200v-9a1.200 1.200 0 0 1 1.200-1.200h4.600a1.200 1.200 0 0 1 1.200 1.200v4"/><path d="M1669.500 179.300h2.600" stroke-width=".9"/>
 <path d="M1675 183.600l2.900 1.600v3.300l-2.900 1.600-2.900-1.600v-3.300z"/><circle cx="1675" cy="186.800" r="1.100"/>
 <!-- camera -->
 <path d="M1697.500 180.300a1 1 0 0 1 1-1h2l1.200-1.800h4.600l1.200 1.800h2a1 1 0 0 1 1 1v7a1 1 0 0 1-1 1h-11a1 1 0 0 1-1-1z"/><circle cx="1704" cy="183.800" r="2.300"/>
 <!-- video -->
 <rect x="1723.300" y="179.300" width="8.600" height="8.400" rx="1"/><path d="M1732 182.500l4.400-2.700v7.400l-4.400-2.700"/>
 <!-- reset -->
 <path d="M1758.800 180.300a5.400 5.400 0 1 1-.9 4.500M1757.400 177.500l1 3.200 3.200-.6"/><path d="M1763.300 185.500v-2.800h2.600" />
 <!-- more -->
 <g fill="#ced0d6" stroke="none"><circle cx="1788.800" cy="178.500" r="1.100"/><circle cx="1788.800" cy="183.300" r="1.100"/><circle cx="1788.800" cy="188.100" r="1.100"/></g>
 <!-- layers search -->
 <path d="M1826.300 185.800h-1.400a.8.800 0 0 1-.8-.8v-6.800a.8.800 0 0 1 .8-.8h9.400a.8.800 0 0 1 .8.800v.8"/><path d="M1830 187.800h-2.400a.8.800 0 0 1-.8-.8v-6.300a.8.800 0 0 1 .8-.8h8.400a.8.800 0 0 1 .8.800v1.800"/><circle cx="1834" cy="186" r="2.300"/><path d="M1835.800 187.800l2.400 2.400"/>
</svg>
<!-- phone screen -->
<div class="abs" style="left:1443px;top:201px;width:353px;height:785px;overflow:hidden;background:linear-gradient(168deg,#11436f 0%,#10406c 30%,#0d3559 62%,#0b2c4d 100%)">
 <div class="abs" style="left:-120px;top:-260px;width:700px;height:420px;background:linear-gradient(180deg,rgba(255,255,255,0) 60%,rgba(255,255,255,.022) 100%);transform:rotate(28deg);transform-origin:0 100%"></div>
 <div class="abs" style="left:-200px;top:380px;width:800px;height:400px;background:linear-gradient(180deg,rgba(0,0,0,.06),rgba(0,0,0,0) 70%);transform:rotate(25deg)"></div>
</div>
<!-- status icons -->
<svg class="abs" style="left:1485px;top:206px" width="11" height="11.500" viewBox="0 0 11 11.500" fill="none" stroke="#fff" stroke-width="1.200" stroke-linejoin="round"><path d="M5.500.8 10 2.500v3.300c0 2.400-1.800 4.200-4.500 5-2.700-.8-4.500-2.600-4.500-5V2.500z"/><path d="M2.800 2.500 8.800 8.800" stroke-width="1.100"/></svg>
<svg class="abs" style="left:1504.700px;top:206px" width="9" height="11" viewBox="0 0 9 11" fill="#fff"><path d="M2.800 0H8a1 1 0 0 1 1 1v9a1 1 0 0 1-1 1H1a1 1 0 0 1-1-1V2.800z"/><path d="M3.300 1v2M5 1v2M6.700 1v2" stroke="#11436f" stroke-width=".6"/></svg>
<svg class="abs" style="left:1733.400px;top:206.500px" width="14" height="10" viewBox="0 0 14 10" fill="#fff"><path d="M7 10 0 2.300C2 .8 4.300 0 7 0s5 .8 7 2.300z"/></svg>
<svg class="abs" style="left:1748.800px;top:206.500px" width="10" height="10" viewBox="0 0 10 10" fill="#fff"><path d="M10 0v10H0z"/></svg>
<svg class="abs" style="left:1765.300px;top:205.700px" width="7" height="11" viewBox="0 0 7 11" fill="#fff"><path d="M2 0h3v1.200h1.300a.7.700 0 0 1 .7.700v8.400a.7.700 0 0 1-.7.700H.7a.7.700 0 0 1-.7-.7V1.900a.7.700 0 0 1 .7-.7H2z"/></svg>
<!-- hamburger -->
<div class="abs" style="left:1460px;top:244.300px;width:18px;height:2.600px;border-radius:1.300px;background:#fff"></div>
<div class="abs" style="left:1460px;top:251.100px;width:18px;height:2.600px;border-radius:1.300px;background:#fff"></div>
<div class="abs" style="left:1460px;top:257.500px;width:18px;height:2.600px;border-radius:1.300px;background:#fff"></div>
<!-- logo -->
<svg class="abs" style="left:1494.400px;top:237px" width="14" height="16" viewBox="0 0 14 16"><rect width="14" height="12.800" fill="#fff"/><path d="M7.200 1.500h2.600v6.800c0 2-1.400 2.900-3.100 2.900-1.500 0-2.600-.7-2.900-2l2-.6c.1.500.4.800.9.800.6 0 .9-.4.900-1.200z" fill="#11436f"/><path d="M10.600 1.500h1.600v9.700h-1.600z" fill="#11436f" opacity=".55"/><rect y="14" width="10" height="1.300" fill="#fff" opacity=".8"/></svg>
<div class="abs" style="left:1512px;top:250.300px;width:68px;height:0;border-top:1px dotted rgba(255,255,255,.16)"></div>
<!-- person -->
<svg class="abs" style="left:1718.800px;top:243.500px" width="17.500" height="17.500" viewBox="0 0 17.500 17.500" fill="#fff"><circle cx="8.750" cy="5" r="4.700"/><path d="M0 17.500v-1.800c0-3 4.300-4.700 8.750-4.700s8.750 1.700 8.750 4.700v1.800z"/></svg>
<!-- bell -->
<svg class="abs" style="left:1754px;top:244px" width="15" height="17.500" viewBox="0 0 15 17.500" fill="#fff"><path d="M7.500 0c.8 0 1.300.5 1.300 1.300v.5c2.500.6 4 2.700 4 5.400v4.300l1.900 1.900v1H.3v-1l1.900-1.900V7.200c0-2.700 1.500-4.800 4-5.400v-.5C6.200.5 6.700 0 7.500 0zM5.700 15.300h3.600c0 1.200-.8 2-1.800 2s-1.800-.8-1.800-2z"/></svg>
<div class="abs" style="left:1764px;top:237px;width:15px;height:15px;border-radius:7.500px;background:#f03a3d"></div>
<!-- dropdown -->
<svg class="abs" style="left:1628px;top:313.400px" width="7.500" height="4.600" viewBox="0 0 7.500 4.600" fill="#fff"><path d="M0 0h7.500L3.750 4.600z"/></svg>
<!-- stat cards -->
<div class="abs" style="left:1477.0px;top:341px;width:73.200px;height:103.200px;border-radius:5px;overflow:hidden;background:#0b2a4a"><div class="abs" style="left:2px;top:2px;width:69px;height:69px;background-image:radial-gradient(circle,#2268aa 0.950px,rgba(0,0,0,0) 1.250px);background-size:3.300px 3.300px;background-position:1.400px 1.400px;-webkit-mask-image:radial-gradient(circle at 50% 50%,#000 28%,rgba(0,0,0,.55) 55%,transparent 72%);mask-image:radial-gradient(circle at 50% 50%,#000 28%,rgba(0,0,0,.55) 55%,transparent 72%)"></div><div class="abs" style="left:0;top:73.500px;width:73.200px;height:30px;background:#22b4fb;overflow:hidden"><div class="abs" style="left:18px;top:8px;width:90px;height:60px;border-radius:50%;border:14px solid #1f87cf;transform:rotate(-8deg);clip-path:none;display:none"></div><svg class="abs" style="left:0;top:0" width="73.200" height="30" viewBox="0 0 73.200 30"><path d="M73.200 3C70 17 58 27.500 36 30h37.200z" fill="#1f87cf"/></svg></div><svg class="abs" style="left:14px;top:15px" width="44" height="44" viewBox="0 0 44 44" fill="none"><path d="M21.500 4.800A17.200 17.200 0 0 0 9 33.500" stroke="#22b4fb" stroke-width="5.600" transform="translate(1 0)"/><path d="M3.500 31 18 25.500 17.500 41z" fill="#22b4fb"/><path d="M23.500 39.200A17.200 17.200 0 0 0 33.500 9.500" stroke="#fff" stroke-width="5.600" stroke-linecap="round"/><path d="M26 4.500 40 5.500 30.500 16z" fill="#fff"/></svg></div><div class="abs" style="left:1583.0px;top:341px;width:73.200px;height:103.200px;border-radius:5px;overflow:hidden;background:#0b2a4a"><div class="abs" style="left:2px;top:2px;width:69px;height:69px;background-image:radial-gradient(circle,#9a7638 0.950px,rgba(0,0,0,0) 1.250px);background-size:3.300px 3.300px;background-position:1.400px 1.400px;-webkit-mask-image:radial-gradient(circle at 50% 50%,#000 28%,rgba(0,0,0,.55) 55%,transparent 72%);mask-image:radial-gradient(circle at 50% 50%,#000 28%,rgba(0,0,0,.55) 55%,transparent 72%)"></div><div class="abs" style="left:0;top:73.500px;width:73.200px;height:30px;background:#fdb827;overflow:hidden"><div class="abs" style="left:18px;top:8px;width:90px;height:60px;border-radius:50%;border:14px solid #d99530;transform:rotate(-8deg);clip-path:none;display:none"></div><svg class="abs" style="left:0;top:0" width="73.200" height="30" viewBox="0 0 73.200 30"><path d="M73.200 3C70 17 58 27.500 36 30h37.200z" fill="#d99530"/></svg></div><svg class="abs" style="left:14px;top:12px" width="50" height="50" viewBox="0 0 50 50" fill="none"><circle cx="22" cy="19.500" r="16.200" stroke="#fff" stroke-width="3.200"/><path d="M12.500 21.500c-.6-4.800 1.500-8.200 4.500-10" stroke="#fff" stroke-width="2.200" stroke-linecap="round"/><path d="M36.500 35.300 45.500 43.500" stroke="#fdb827" stroke-width="6.500" stroke-linecap="round"/></svg></div><div class="abs" style="left:1689.0px;top:341px;width:73.200px;height:103.200px;border-radius:5px;overflow:hidden;background:#0b2a4a"><div class="abs" style="left:2px;top:2px;width:69px;height:69px;background-image:radial-gradient(circle,#218a5c 0.950px,rgba(0,0,0,0) 1.250px);background-size:3.300px 3.300px;background-position:1.400px 1.400px;-webkit-mask-image:radial-gradient(circle at 50% 50%,#000 28%,rgba(0,0,0,.55) 55%,transparent 72%);mask-image:radial-gradient(circle at 50% 50%,#000 28%,rgba(0,0,0,.55) 55%,transparent 72%)"></div><div class="abs" style="left:0;top:73.500px;width:73.200px;height:30px;background:#34c85f;overflow:hidden"><div class="abs" style="left:18px;top:8px;width:90px;height:60px;border-radius:50%;border:14px solid #2a9e4b;transform:rotate(-8deg);clip-path:none;display:none"></div><svg class="abs" style="left:0;top:0" width="73.200" height="30" viewBox="0 0 73.200 30"><path d="M73.200 3C70 17 58 27.500 36 30h37.200z" fill="#2a9e4b"/></svg></div><svg class="abs" style="left:18px;top:13px" width="44" height="40" viewBox="0 0 44 40"><rect x="3" y="17" width="7.700" height="20.400" rx="2.200" fill="#34c85f"/><path d="M15 21 28.500 3.200c1.800-.5 4 1.200 4.200 3.300L28.800 16.500h8.800c1.500 0 2 1 1.800 2.300l-3.300 15.800c-.4 1.800-1.300 2.800-3 2.800H18c-1.800 0-3-1.200-3-3z" fill="#fff"/></svg></div>
<!-- white panel -->
<div class="abs" style="left:1460px;top:504.500px;width:319px;height:418px;border-radius:9px;background:#f4f4f4"></div>
<div class="abs" style="left:1516.0px;top:525.5px;width:99px;height:100px;border-radius:13px;background:#fff;box-shadow:0 0 2px rgba(0,0,0,.06)"><div class="abs" style="left:19.500px;top:7.500px;width:60px;height:60px;border-radius:30px;background:#ffe2e2"></div><svg class="abs" style="left:31px;top:18.800px" width="37.500" height="37.500" viewBox="0 0 37.500 37.500" fill="none" stroke-width="7.800"><circle cx="18.750" cy="18.750" r="14.600" stroke="#ff9c27"/><path d="M4.150 18.750a14.600 14.600 0 0 1 25-10.300" stroke="#ee4037"/><path d="M29.100 8.400a14.600 14.600 0 0 1 4.250 10.350" stroke="#3b78f0"/></svg></div><div class="abs" style="left:1624.0px;top:525.5px;width:99px;height:100px;border-radius:13px;background:#fff;box-shadow:0 0 2px rgba(0,0,0,.06)"><div class="abs" style="left:19.500px;top:7.500px;width:60px;height:60px;border-radius:30px;background:#fff4e0"></div><svg class="abs" style="left:33px;top:17px" width="34" height="38" viewBox="0 0 34 38"><rect x=".5" y="3" width="26" height="29.500" rx="2" fill="#ffc843"/><path d="M.5 5a2 2 0 0 1 2-2h22a2 2 0 0 1 2 2v3.500H.5z" fill="#59616b"/><path d="M4 .8v5M8 .8v5M12 .8v5M16 .8v5M20 .8v5M24 .8v5" stroke="#cfd4da" stroke-width="1.300" stroke-linecap="round"/><path d="M4.500 13h10M4.500 17.500h7M4.500 22h8" stroke="#d98c2b" stroke-width="1.600"/><path d="M26 31l6.500 5.500" stroke="#e8392b" stroke-width="2.200" stroke-linecap="round"/><circle cx="22.500" cy="27.500" r="5.300" fill="#b8ecf5" stroke="#111" stroke-width="2.200"/></svg></div><div class="abs" style="left:1516.0px;top:633.7px;width:99px;height:100px;border-radius:13px;background:#fff;box-shadow:0 0 2px rgba(0,0,0,.06)"><div class="abs" style="left:19.500px;top:7.500px;width:60px;height:60px;border-radius:30px;background:#e7e7fc"></div><svg class="abs" style="left:34.500px;top:16.500px" width="31" height="42" viewBox="0 0 31 42"><rect x=".5" y="5" width="30" height="36" rx="2.500" fill="#c27c3e"/><rect x="3.500" y="8" width="24" height="30" fill="#fff"/><path d="M9.500 5.500c0-2 1.500-2.500 3-2.500 0-1.800 1.300-2.800 3-2.800s3 1 3 2.800c1.500 0 3 .5 3 2.500v2.500h-12z" fill="#ffc233"/><path d="M7 12.500h17" stroke="#222" stroke-width="1.100"/><path d="M11 16h9" stroke="#222" stroke-width="1.800"/><rect x="8.500" y="27" width="3" height="4" fill="#ee4037"/><rect x="14" y="24" width="3" height="7" fill="#ff9c27"/><rect x="19.500" y="20.500" width="3" height="10.500" fill="#29a8f5"/><path d="M8 34h3.500M13.500 34h3.500M19 34h3.500" stroke="#222" stroke-width="1.300"/></svg></div><div class="abs" style="left:1624.0px;top:633.7px;width:99px;height:100px;border-radius:13px;background:#fff;box-shadow:0 0 2px rgba(0,0,0,.06)"><div class="abs" style="left:19.500px;top:7.500px;width:60px;height:60px;border-radius:30px;background:#8fd0e4"></div><svg class="abs" style="left:35.500px;top:20px" width="36" height="36" viewBox="0 0 36 36"><path d="M7 1h19.500v33H1V7z" fill="#0f9b93" stroke="#fff" stroke-width="1"/><path d="M7 1v6H1" fill="#7fd3cd" stroke="#fff" stroke-width="1"/><path d="M10 7.500h13M4 12.500h19M4 17.500h17M4 22.500h13M4 27.500h9" stroke="#fff" stroke-width="1.300"/><path d="M31.500 2.500 34 4 18 30.500 14.500 32.500 15.500 28.500z" fill="#fff" stroke="#0f9b93" stroke-width=".5"/></svg></div><div class="abs" style="left:1570.0px;top:742.0px;width:99px;height:100px;border-radius:13px;background:#fff;box-shadow:0 0 2px rgba(0,0,0,.06)"><div class="abs" style="left:19.500px;top:7.500px;width:60px;height:60px;border-radius:30px;background:#e1f8fe"></div><svg class="abs" style="left:31px;top:19px" width="36" height="38" viewBox="0 0 36 38"><rect x="4.500" y=".5" width="10" height="37" rx="2.500" fill="#5cc0b8"/><rect x="11" y=".5" width="24.500" height="37" rx="2.500" fill="#3f8be6"/><rect x="11" y=".5" width="3" height="37" fill="#4a9fd8"/><path d="M15.500 8.500h14M15.500 14h10" stroke="#fff" stroke-width="2.600" stroke-linecap="round"/><rect x=".5" y="9" width="8" height="4" rx="1" fill="#111"/><rect x=".5" y="25.500" width="8" height="4" rx="1" fill="#111"/></svg></div>
<!-- nav pill -->
<div class="abs" style="left:1573.700px;top:975.500px;width:92px;height:3.300px;border-radius:2px;background:#f2f2f2"></div>
<!-- window bottom edge -->
<div class="abs" style="left:1389px;top:986px;width:463px;height:1.500px;background:#0b0c0e"></div>

<span class="ft" style="left:106.60px;top:4.90px;height:20px;line-height:20px;font-size:14px;color:#f4f4f4;letter-spacing:1.159px;">Apps</span>
<span class="ft" style="left:919.30px;top:4.90px;height:20px;line-height:20px;font-size:14px;color:#f4f4f4;letter-spacing:0.014px;">Jul 11</span>
<span class="ft" style="left:965.30px;top:4.90px;height:20px;line-height:20px;font-size:14px;color:#f4f4f4;letter-spacing:0.088px;">15:00</span>
<span class="ft" style="left:42.60px;top:39.30px;height:20px;line-height:20px;font-size:13.7px;color:#8b92a0;letter-spacing:-0.221px;">File</span>
<span class="ft" style="left:79.30px;top:39.30px;height:20px;line-height:20px;font-size:13.7px;color:#8b92a0;letter-spacing:0.035px;">Edit</span>
<span class="ft" style="left:118.30px;top:39.30px;height:20px;line-height:20px;font-size:13.7px;color:#8b92a0;letter-spacing:-0.202px;">Selection</span>
<span class="ft" style="left:188.30px;top:39.30px;height:20px;line-height:20px;font-size:13.7px;color:#8b92a0;letter-spacing:0.093px;">View</span>
<span class="ft" style="left:233.30px;top:39.30px;height:20px;line-height:20px;font-size:13.7px;color:#8b92a0;letter-spacing:-1.566px;">Go</span>
<span class="ft" style="left:265.30px;top:39.30px;height:20px;line-height:20px;font-size:13.7px;color:#8b92a0;letter-spacing:-0.705px;">Run</span>
<span class="ft" style="left:304.60px;top:39.30px;height:20px;line-height:20px;font-size:13.7px;color:#8b92a0;letter-spacing:-0.091px;">Terminal</span>
<span class="ft" style="left:371.00px;top:39.30px;height:20px;line-height:20px;font-size:13.7px;color:#8b92a0;letter-spacing:-0.052px;">Help</span>
<span class="ft" style="left:956.60px;top:39.30px;height:20px;line-height:20px;font-size:13.7px;color:#7f8694;letter-spacing:-0.134px;">e_audit</span>
<span class="ft" style="left:66.30px;top:72.10px;height:18px;line-height:18px;font-size:11.9px;color:#b39f7c;letter-spacing:-0.210px;">presenter.dart</span>
<span class="ft" style="left:141.80px;top:72.60px;height:18px;line-height:18px;font-size:10.9px;color:#b39f7c;letter-spacing:-0.028px;opacity:.72;">.../login</span>
<span class="ft" style="left:181.05px;top:72.60px;height:18px;line-height:18px;font-size:10px;color:#b39f7c;letter-spacing:0.556px;opacity:.9;">M</span>
<span class="ft" style="left:239.30px;top:72.10px;height:18px;line-height:18px;font-size:11.9px;color:#6d7483;letter-spacing:-0.067px;">view.dart</span>
<span class="ft" style="left:290.05px;top:72.60px;height:18px;line-height:18px;font-size:10.9px;color:#6d7483;letter-spacing:0.066px;opacity:.72;">.../login</span>
<span class="ft" style="left:375.30px;top:72.10px;height:18px;line-height:18px;font-size:11.9px;color:#b98a78;letter-spacing:-0.346px;">local_otp_service.dart</span>
<span class="ft" style="left:488.05px;top:72.60px;height:18px;line-height:18px;font-size:10px;color:#b98a78;letter-spacing:-0.268px;opacity:.9;">1, M</span>
<span class="ft" style="left:556.80px;top:72.10px;height:18px;line-height:18px;font-size:11.9px;color:#b39f7c;letter-spacing:-0.161px;">view.dart</span>
<span class="ft" style="left:607.30px;top:72.60px;height:18px;line-height:18px;font-size:10.9px;color:#b39f7c;letter-spacing:0.192px;opacity:.72;">.../otp</span>
<span class="ft" style="left:639.30px;top:72.60px;height:18px;line-height:18px;font-size:10px;color:#b39f7c;letter-spacing:0.556px;opacity:.9;">M</span>
<span class="ft" style="left:698.55px;top:72.10px;height:18px;line-height:18px;font-size:11.9px;color:#d8c49c;letter-spacing:-0.495px;font-style:italic;">circular_loader_component.dart (Working Tree)</span>
<span class="ft" style="left:930.05px;top:72.60px;height:18px;line-height:18px;font-size:10px;color:#d8c49c;letter-spacing:0.556px;opacity:.9;">M</span>
<span class="ft" style="left:989.80px;top:72.10px;height:18px;line-height:18px;font-size:11.9px;color:#b98a78;letter-spacing:-0.190px;">presenter.dart</span>
<span class="ft" style="left:1065.05px;top:72.60px;height:18px;line-height:18px;font-size:10.9px;color:#b98a78;letter-spacing:0.150px;opacity:.72;">.../otp</span>
<span class="ft" style="left:1097.30px;top:72.60px;height:18px;line-height:18px;font-size:10px;color:#b98a78;letter-spacing:0.066px;opacity:.9;">5, M</span>
<span class="ft" style="left:1166.80px;top:72.10px;height:18px;line-height:18px;font-size:11.9px;color:#b39f7c;letter-spacing:-0.356px;">circular_loader_component.dart</span>
<span class="ft" style="left:1327.55px;top:72.60px;height:18px;line-height:18px;font-size:10px;color:#b39f7c;letter-spacing:0.556px;opacity:.9;">M</span>
<span class="ft" style="left:1386.80px;top:72.10px;height:18px;line-height:18px;font-size:11.9px;color:#6d7483;letter-spacing:-0.360px;">user_model.dart</span>
<span class="ft" style="left:1517.55px;top:72.10px;height:18px;line-height:18px;font-size:11.9px;color:#6d7483;letter-spacing:-0.272px;">api_end_point.dart</span>
<span class="ft" style="left:1661.05px;top:72.10px;height:18px;line-height:18px;font-size:11.9px;color:#c79a68;letter-spacing:-0.067px;">view.dart</span>
<span class="ft" style="left:1710.80px;top:72.60px;height:18px;line-height:18px;font-size:10px;color:#c79a68;letter-spacing:0.619px;opacity:.9;">.</span>
<span class="ft" style="left:53.05px;top:95.00px;height:18px;line-height:18px;font-size:11.9px;color:#8a919e;letter-spacing:0.372px;">lib</span>
<span class="ft" style="left:78.05px;top:95.00px;height:18px;line-height:18px;font-size:11.9px;color:#8a919e;letter-spacing:-0.305px;">component</span>
<span class="ft" style="left:165.30px;top:95.00px;height:18px;line-height:18px;font-size:11.9px;color:#8a919e;letter-spacing:-0.339px;">circular_loader_component.dart</span>
<span class="ft" style="left:351.05px;top:95.00px;height:18px;line-height:18px;font-size:11.9px;color:#8a919e;letter-spacing:-0.469px;">CircularLoaderComponent</span>
<span class="ft" style="left:508.80px;top:95.00px;height:18px;line-height:18px;font-size:11.9px;color:#8a919e;letter-spacing:-0.056px;">build</span>
<span class="ft" style="left:56.00px;top:744.70px;height:16px;line-height:16px;font-size:9.4px;color:#7c8492;letter-spacing:-0.587px;">PROBLEMS</span>
<span class="ft" style="left:142.00px;top:744.70px;height:16px;line-height:16px;font-size:9.4px;color:#7c8492;letter-spacing:-0.429px;">OUTPUT</span>
<span class="ft" style="left:197.60px;top:744.70px;height:16px;line-height:16px;font-size:9.4px;color:#7c8492;letter-spacing:-0.666px;">DEBUG CONSOLE</span>
<span class="ft" style="left:290.00px;top:744.70px;height:16px;line-height:16px;font-size:9.4px;color:#d7dae0;letter-spacing:-0.387px;">TERMINAL</span>
<span class="ft" style="left:353.30px;top:744.70px;height:16px;line-height:16px;font-size:9.4px;color:#7c8492;letter-spacing:-0.685px;">PORTS</span>
<span class="ft" style="left:110.60px;top:744.70px;height:16px;line-height:16px;font-size:9.2px;color:#e6ebf5;letter-spacing:0.166px;">98</span>
<span class="ft" style="left:1160.30px;top:1061.50px;height:16px;line-height:16px;font-size:11px;color:#8b92a0;letter-spacing:-0.245px;">Not Committed Yet</span>
<span class="ft" style="left:1288.50px;top:1061.50px;height:16px;line-height:16px;font-size:11px;color:#8b92a0;letter-spacing:-0.603px;">Ln 40, Col 1</span>
<span class="ft" style="left:1353.90px;top:1061.50px;height:16px;line-height:16px;font-size:11px;color:#8b92a0;letter-spacing:-0.865px;">Spaces: 2</span>
<span class="ft" style="left:1408.10px;top:1061.50px;height:16px;line-height:16px;font-size:11px;color:#8b92a0;letter-spacing:-0.918px;">UTF-8</span>
<span class="ft" style="left:1447.90px;top:1061.50px;height:16px;line-height:16px;font-size:11px;color:#8b92a0;letter-spacing:-2.044px;">LF</span>
<span class="ft" style="left:1471.80px;top:1061.50px;height:16px;line-height:16px;font-size:11px;color:#8b92a0;letter-spacing:0.847px;">{ }</span>
<span class="ft" style="left:1488.00px;top:1061.50px;height:16px;line-height:16px;font-size:11px;color:#8b92a0;letter-spacing:0.106px;">Dart</span>
<span class="ft" style="left:1546.50px;top:1061.50px;height:16px;line-height:16px;font-size:11px;color:#8b92a0;letter-spacing:-0.444px;">Medium Phone API 36 (android-x64 emulator)</span>
<span class="ft" style="left:1778.50px;top:1061.50px;height:16px;line-height:16px;font-size:11px;color:#8b92a0;letter-spacing:0.019px;">Prettier</span>
<span class="ft" style="left:1826.30px;top:1061.50px;height:16px;line-height:16px;font-size:11px;color:#8b92a0;letter-spacing:-0.465px;">Zero Two</span>
<span class="ft" style="left:1511.80px;top:94.80px;height:20px;line-height:20px;font-size:13.6px;color:#9b9b9b;letter-spacing:0.369px;font-weight:bold;">Running Devices - e-audit-main</span>
<span class="ft" style="left:1420.55px;top:135.30px;height:20px;line-height:20px;font-size:13.6px;color:#ced0d6;letter-spacing:0.201px;">Medium Phone API 36</span>
<span class="ft" style="left:1456.70px;top:202.20px;height:18px;line-height:18px;font-size:11.6px;color:#ffffff;letter-spacing:0.474px;">3:00</span>
<span class="ft" style="left:1510.55px;top:233.20px;height:20px;line-height:20px;font-size:15.2px;color:#ffffff;letter-spacing:-0.802px;font-weight:bold;">Jamkrindo</span>
<span class="ft" style="left:1512.70px;top:258.30px;height:10px;line-height:10px;font-size:5.7px;color:#ffffff;letter-spacing:0.004px;font-weight:bold;">A member of</span>
<span class="ft" style="left:1550.30px;top:258.30px;height:10px;line-height:10px;font-size:7.6px;color:#ee3a2c;letter-spacing:0.072px;font-weight:bold;">IFG</span>
<span class="ft" style="left:1688.70px;top:233.90px;height:18px;line-height:18px;font-size:11.8px;color:#ffffff;letter-spacing:0.500px;">Ade</span>
<span class="ft" style="left:1670.80px;top:251.00px;height:18px;line-height:18px;font-size:11.8px;color:#ffffff;letter-spacing:0.502px;">Vendor</span>
<span class="ft" style="left:1768.60px;top:238.60px;height:12px;line-height:12px;font-size:9.5px;color:#ffffff;letter-spacing:0.503px;">0</span>
<span class="ft" style="left:1596.30px;top:308.60px;height:14px;line-height:14px;font-size:9.8px;color:#ffffff;letter-spacing:1.001px;">2023</span>
<span class="ft" style="left:1505.50px;top:420.40px;height:18px;line-height:18px;font-size:12.2px;color:#0a0a0a;letter-spacing:1.137px;font-weight:bold;">67</span>
<span class="ft" style="left:1608.30px;top:420.40px;height:18px;line-height:18px;font-size:12.2px;color:#0a0a0a;letter-spacing:1.228px;font-weight:bold;">792</span>
<span class="ft" style="left:1710.10px;top:420.40px;height:18px;line-height:18px;font-size:12.2px;color:#0a0a0a;letter-spacing:1.158px;font-weight:bold;">2405</span>
<span class="ft" style="left:1505.90px;top:453.00px;height:14px;line-height:14px;font-size:10.6px;color:#f3f6fa;letter-spacing:-0.219px;font-weight:bold;">On</span>
<span class="ft" style="left:1499.70px;top:468.40px;height:14px;line-height:14px;font-size:10.6px;color:#f3f6fa;letter-spacing:-0.277px;font-weight:bold;">Going</span>
<span class="ft" style="left:1607.10px;top:453.00px;height:14px;line-height:14px;font-size:10.6px;color:#f3f6fa;letter-spacing:0.167px;font-weight:bold;">Total</span>
<span class="ft" style="left:1602.40px;top:468.40px;height:14px;line-height:14px;font-size:10.6px;color:#f3f6fa;letter-spacing:-0.258px;font-weight:bold;">Finding</span>
<span class="ft" style="left:1713.05px;top:453.00px;height:14px;line-height:14px;font-size:10.6px;color:#f3f6fa;letter-spacing:0.180px;font-weight:bold;">Total</span>
<span class="ft" style="left:1688.70px;top:468.40px;height:14px;line-height:14px;font-size:10.6px;color:#f3f6fa;letter-spacing:-0.256px;font-weight:bold;">Recomendation</span>
<span class="ft" style="left:1539.70px;top:605.70px;height:14px;line-height:14px;font-size:9.9px;color:#151515;letter-spacing:0.461px;">Dashboard</span>
<span class="ft" style="left:1643.70px;top:605.70px;height:14px;line-height:14px;font-size:9.9px;color:#151515;letter-spacing:0.395px;">Review Task</span>
<span class="ft" style="left:1549.30px;top:713.70px;height:14px;line-height:14px;font-size:9.9px;color:#151515;letter-spacing:0.552px;">Report</span>
<span class="ft" style="left:1659.70px;top:713.70px;height:14px;line-height:14px;font-size:9.9px;color:#151515;letter-spacing:0.487px;">Reviu</span>
<span class="ft" style="left:1588.05px;top:821.75px;height:14px;line-height:14px;font-size:9.9px;color:#151515;letter-spacing:0.501px;">Manual Book</span>
<span class="ft" style="left:1585.55px;top:936.30px;height:16px;line-height:16px;font-size:12.1px;color:#ffffff;letter-spacing:0.204px;font-weight:bold;">Versi 2.0.34</span>
<span class="ft" style="left:1544.80px;top:957.80px;height:16px;line-height:16px;font-size:12.1px;color:#ffffff;letter-spacing:-0.039px;font-weight:bold;">E-Audit Jamkrindo © 2023</span>
</body></html>
